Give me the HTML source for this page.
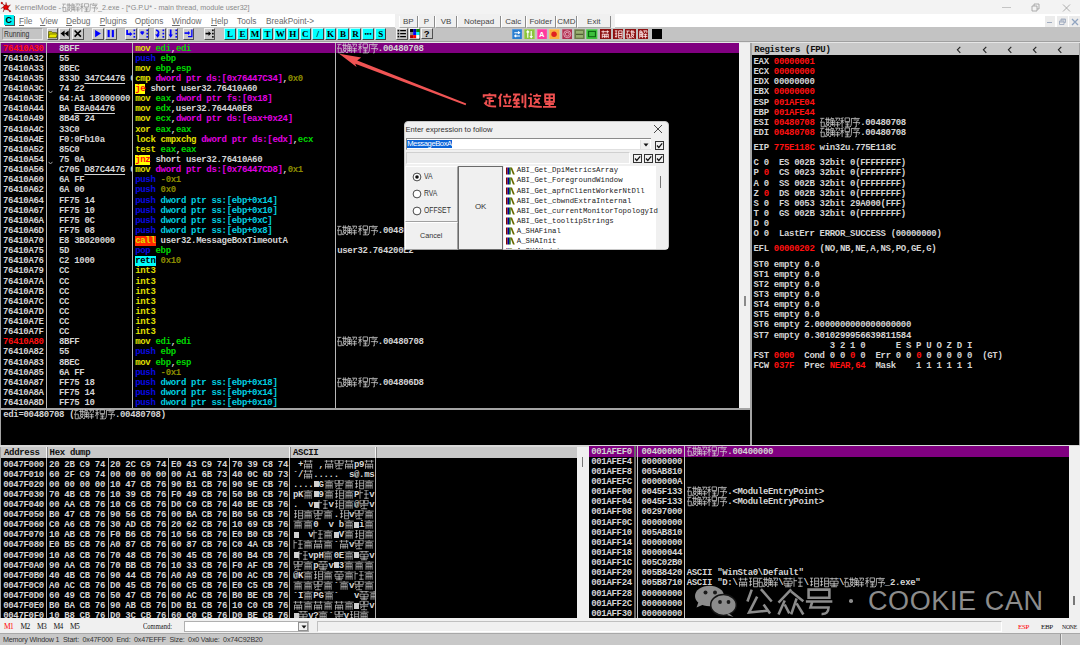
<!DOCTYPE html>
<html><head><meta charset="utf-8">
<style>
*{margin:0;padding:0;box-sizing:border-box}
html,body{width:1080px;height:645px;overflow:hidden;background:#f0f0f0;position:relative;font-family:"Liberation Sans",sans-serif}
.a{position:absolute}
.m{font-family:"Liberation Mono",monospace;font-weight:bold;font-size:9.00px;letter-spacing:-0.32px;line-height:10px;height:10px;white-space:pre;color:#d4d4d4}
.m u{text-decoration:underline;text-underline-offset:1.5px;text-decoration-thickness:1px}
.s{font-family:"Liberation Sans",sans-serif;font-size:8px;line-height:10px;height:10px;white-space:pre}
</style></head><body>
<div class="a" style="left:0.00px;top:0.00px;width:1080.00px;height:14.30px;background:#f3f3f3"></div>
<div class="a" style="left:0.00px;top:14.30px;width:1080.00px;height:13.00px;background:#fff"></div>
<div class="a" style="left:0.00px;top:27.30px;width:1080.00px;height:14.00px;background:#c3c3c3"></div>
<div class="a" style="left:0.00px;top:40.70px;width:1080.00px;height:1.00px;background:#a0a0a0"></div>
<div class="a" style="left:0.00px;top:41.70px;width:1080.00px;height:1.30px;background:#e6e6e6"></div>
<div class="a" style="left:0.00px;top:43.00px;width:1080.00px;height:590.00px;background:#a4a4a4"></div>
<div class="a" style="left:1.00px;top:43.00px;width:738.40px;height:365.00px;background:#000"></div>
<div class="a" style="left:739.40px;top:43.00px;width:11.00px;height:365.00px;background:#f0f0f0"></div>
<div class="a" style="left:744.00px;top:295.50px;width:2.00px;height:10.70px;background:#8a8a8a"></div>
<div class="a" style="left:1.00px;top:409.50px;width:749.20px;height:35.50px;background:#000"></div>
<div class="a" style="left:751.50px;top:43.00px;width:327.50px;height:12.00px;background:#c8c8c8"></div>
<div class="a" style="left:751.50px;top:55.00px;width:327.50px;height:390.00px;background:#000"></div>
<div class="a" style="left:0.00px;top:445.00px;width:1080.00px;height:1.50px;background:#d8d8d8"></div>
<div class="a" style="left:1.00px;top:446.50px;width:576.00px;height:11.50px;background:#c8c8c8"></div>
<div class="a" style="left:1.00px;top:458.00px;width:576.00px;height:160.30px;background:#000"></div>
<div class="a" style="left:577.00px;top:446.50px;width:12.00px;height:172.00px;background:#f0f0f0"></div>
<div class="a" style="left:581.50px;top:457.00px;width:1.50px;height:10.00px;background:#777"></div>
<div class="a" style="left:589.00px;top:446.00px;width:480.00px;height:172.30px;background:#000"></div>
<div class="a" style="left:1068.60px;top:446.00px;width:11.40px;height:172.30px;background:#f0f0f0"></div>
<div class="a" style="left:1073.00px;top:595.50px;width:1.50px;height:9.50px;background:#777"></div>
<div class="a" style="left:0.00px;top:618.30px;width:1080.00px;height:15.00px;background:#f0f0f0"></div>
<div class="a" style="left:0.00px;top:633.30px;width:1080.00px;height:11.70px;background:#c8c8c8"></div>
<div class="a" style="left:0.00px;top:633.30px;width:1080.00px;height:1.00px;background:#a8a8a8"></div>
<svg width="0" height="0" style="position:absolute"><defs><path id="G0" d="M0.3 1.2H4.3M2.2 1.2L0.6 5.8M1.2 5h3v4.5h-3zM5 2.2H9.6V3.6M6.6 0.3V5.5Q6.3 8 5 9.8M8.2 0.3V5M6.6 5.4H9.3Q8.5 8 6 9.7M7 6.6Q8.5 8.8 9.8 9.6"/><path id="G1" d="M1.5 0.3L0.5 2.8M1.2 1.4H3.6L3 2.6M0.8 3h3.4V9.6M0.8 3V8Q0.8 9 0.2 9.8M0.8 5.2H4.2M0.8 7.3H4.2M2.5 3V8.5M5 1H9.4Q9.4 3.3 8.6 3.8M7 1Q6.8 3.2 5.2 4.2M5.3 5.5H9.7M5 7.6H9.8M7.5 4.2V9.8"/><path id="G2" d="M0.5 1.4L3.5 0.6M0.3 3.6H4M2.1 1V9.8M2.1 3.8L0.3 7M2.1 4.2L3.8 6M5 0.8h4.4v3.6h-4.4zM5 5.6H9.5M5.3 7.6H9.2M4.8 9.6H9.8M7.2 5.6V9.6"/><path id="G3" d="M5 0.2V1.2M1.2 1.3H9.6M1.4 1.3V6Q1.3 8.5 0.2 9.8M3.5 2.8H8.6L6.2 4.6M2.8 5.4H9.6Q9.2 6.5 8.4 7.2M6.2 4.6V9.6Q6 10 5 9.4"/><path id="G4" d="M5 0.2V1.5M1 3V1.5H9V3M3 3.5H7M5 3.5V8M5 5.5H8M3 5L2.5 7.5M1.5 6.5C3 9 5 9.3 9.5 9.3"/><path id="G5" d="M3 0.5L1 4M2 2.5V9.5M6.5 0.5V1.8M4 2.5H9.5M5 4L6 7.5M9 4L8 7.5M4 9H10"/><path id="G6" d="M0.5 1H5.5M3 1L1 5H5M3.5 3.5L4.5 5M3 5.5V9M1 7H5M0.5 9.5H5.5M7 1.5V7M9 0.5V9.5L8 9"/><path id="G7" d="M2 0.5L3 1.5M0.5 3.5H2.5V8L1 9.5M1.5 8.5C4 9.5 7 9.5 10 9.5M6.5 0.5V1.5M4 2H9.5M5 3.5L8.5 7.5M8.5 3.5L4.5 7.5"/><path id="G8" d="M2 1h6v5h-6zM2 3.5H8M5 1V9M2 7.5H8M0.5 9.5H9.5"/><path id="G9" d="M2 0.6L0.4 5M5.4 0.4L9.4 5M4 3.2L1 9.1L7.7 8.4M6.4 6.1L8.8 9.4"/><path id="G10" d="M5.5 0.5L0.8 5.4M5.5 1.3L10 4.9M3.1 4.6L0.8 9.8M3.1 6.1L4.8 9.4M7.5 3.9L5.5 9.8M7.5 5.7L10 9.8"/><path id="G11" d="M1.2 0.6h7.7v3h-7.7zM0.2 5H10M2.6 5L1.9 7.2H8.6Q8.5 9.8 6 9.6"/><path id="G12" d="M0.5 1.5H9.5M3 0.5V3M7 0.5V3M1 4h8v2.5h-8zM5 4V9.5M1 8H9M2 9.5H8"/><path id="G13" d="M1 1L4 1M2.5 1V9M1 4.5H4M1 8L4 7M5.5 1h4v8.5h-4zM5.5 4H9.5M5.5 6.5H9.5"/><path id="G14" d="M0.5 2H9.5M2.5 0.5V4M7.5 0.5V4M1 5H9M1.5 5V9.5M8.5 5V9.5M1.5 7.5H8.5M4 5V9.5M6 5V9.5"/><path id="G15" d="M1 1h3.5v3.5h-3.5zM5.5 1h3.5v3.5h-3.5zM1 6H9M5 5V9.5M2 9.5H8M1 8L3 7"/><path id="G16" d="M5 0.5V2M0.5 2H9.5M2 3.5V9.5M2 3.5H8V9.5M2 6.5H8M4 3.5V9.5M6 3.5V9.5"/><path id="G17" d="M1 0.5V9.5M1 3.5H4M5 1H9.5M7 1V9.5M5 5H9.5M5 9H9.5"/><path id="G18" d="M1.5 2.5h6v6h-6z" fill="currentColor" stroke="none"/></defs></svg>
<div class="a" style="left:1.00px;top:43.00px;width:738.40px;height:10.43px;background:#800080"></div>
<div class="a m" style="left:3.00px;top:43.56px;"><span style="color:#ff1010">76410A30</span></div>
<div class="a m" style="left:59px;top:43.56px;width:72.6px;overflow:hidden;color:#d4d4d4">8BFF</div>
<div class="a m" style="left:135.20px;top:43.56px;"><span style="color:#e0e000">mov</span><span style="color:#d4d4d4"> </span><span style="color:#00d800">edi</span><span style="color:#d4d4d4">,</span><span style="color:#00d800">edi</span></div>
<div class="a m" style="left:337.20px;top:43.56px;"><svg width="10.16" height="10.40" viewBox="0 0 10 10" style="vertical-align:top;position:relative;top:-1.00px;overflow:visible" fill="none" stroke="#d4d4d4" stroke-width="0.75"><use href="#G0"/></svg><svg width="10.16" height="10.40" viewBox="0 0 10 10" style="vertical-align:top;position:relative;top:-1.00px;overflow:visible" fill="none" stroke="#d4d4d4" stroke-width="0.75"><use href="#G1"/></svg><svg width="10.16" height="10.40" viewBox="0 0 10 10" style="vertical-align:top;position:relative;top:-1.00px;overflow:visible" fill="none" stroke="#d4d4d4" stroke-width="0.75"><use href="#G2"/></svg><svg width="10.16" height="10.40" viewBox="0 0 10 10" style="vertical-align:top;position:relative;top:-1.00px;overflow:visible" fill="none" stroke="#d4d4d4" stroke-width="0.75"><use href="#G3"/></svg>.00480708</div>
<div class="a m" style="left:3.00px;top:53.70px;"><span style="color:#d4d4d4">76410A32</span></div>
<div class="a m" style="left:59px;top:53.70px;width:72.6px;overflow:hidden;color:#d4d4d4">55</div>
<div class="a m" style="left:135.20px;top:53.70px;"><span style="color:#0a0ae0">push</span><span style="color:#d4d4d4"> </span><span style="color:#00d800">ebp</span></div>
<div class="a m" style="left:3.00px;top:63.83px;"><span style="color:#d4d4d4">76410A33</span></div>
<div class="a m" style="left:59px;top:63.83px;width:72.6px;overflow:hidden;color:#d4d4d4">8BEC</div>
<div class="a m" style="left:135.20px;top:63.83px;"><span style="color:#e0e000">mov</span><span style="color:#d4d4d4"> </span><span style="color:#00d800">ebp</span><span style="color:#d4d4d4">,</span><span style="color:#00d800">esp</span></div>
<div class="a m" style="left:3.00px;top:73.96px;"><span style="color:#d4d4d4">76410A35</span></div>
<div class="a m" style="left:59px;top:73.96px;width:72.6px;overflow:hidden;color:#d4d4d4">833D <u>347C4476</u> 0</div>
<div class="a m" style="left:135.20px;top:73.96px;"><span style="color:#e0e000">cmp</span><span style="color:#d4d4d4"> </span><span style="color:#e000e0">dword ptr ds:[0x76447C34]</span><span style="color:#d4d4d4">,</span><span style="color:#8c8c00">0x0</span></div>
<div class="a m" style="left:3.00px;top:84.09px;"><span style="color:#d4d4d4">76410A3C</span></div>
<div class="a m" style="left:59px;top:84.09px;width:72.6px;overflow:hidden;color:#d4d4d4">74 22</div>
<div class="a m" style="left:135.20px;top:84.09px;"><span style="display:inline-block;height:10.2px;vertical-align:top;color:#ff1010;background:#ffff00">je</span><span style="color:#d4d4d4"> short user32.76410A60</span></div>
<div class="a m" style="left:3.00px;top:94.22px;"><span style="color:#d4d4d4">76410A3E</span></div>
<div class="a m" style="left:59px;top:94.22px;width:72.6px;overflow:hidden;color:#d4d4d4">64:A1 18000000</div>
<div class="a m" style="left:135.20px;top:94.22px;"><span style="color:#e0e000">mov</span><span style="color:#d4d4d4"> </span><span style="color:#00d800">eax</span><span style="color:#d4d4d4">,</span><span style="color:#e000e0">dword ptr fs:[0x18]</span></div>
<div class="a m" style="left:3.00px;top:104.34px;"><span style="color:#d4d4d4">76410A44</span></div>
<div class="a m" style="left:59px;top:104.34px;width:72.6px;overflow:hidden;color:#d4d4d4">BA <u>E8A04476</u></div>
<div class="a m" style="left:135.20px;top:104.34px;"><span style="color:#e0e000">mov</span><span style="color:#d4d4d4"> </span><span style="color:#00d800">edx</span><span style="color:#d4d4d4">,user32.7644A0E8</span></div>
<div class="a m" style="left:3.00px;top:114.48px;"><span style="color:#d4d4d4">76410A49</span></div>
<div class="a m" style="left:59px;top:114.48px;width:72.6px;overflow:hidden;color:#d4d4d4">8B48 24</div>
<div class="a m" style="left:135.20px;top:114.48px;"><span style="color:#e0e000">mov</span><span style="color:#d4d4d4"> </span><span style="color:#00d800">ecx</span><span style="color:#d4d4d4">,</span><span style="color:#e000e0">dword ptr ds:[eax+0x24]</span></div>
<div class="a m" style="left:3.00px;top:124.61px;"><span style="color:#d4d4d4">76410A4C</span></div>
<div class="a m" style="left:59px;top:124.61px;width:72.6px;overflow:hidden;color:#d4d4d4">33C0</div>
<div class="a m" style="left:135.20px;top:124.61px;"><span style="color:#e0e000">xor</span><span style="color:#d4d4d4"> </span><span style="color:#00d800">eax</span><span style="color:#d4d4d4">,</span><span style="color:#00d800">eax</span></div>
<div class="a m" style="left:3.00px;top:134.74px;"><span style="color:#d4d4d4">76410A4E</span></div>
<div class="a m" style="left:59px;top:134.74px;width:72.6px;overflow:hidden;color:#d4d4d4">F0:0Fb10a</div>
<div class="a m" style="left:135.20px;top:134.74px;"><span style="color:#e0e000">lock cmpxchg</span><span style="color:#d4d4d4"> </span><span style="color:#e000e0">dword ptr ds:[edx]</span><span style="color:#d4d4d4">,</span><span style="color:#00d800">ecx</span></div>
<div class="a m" style="left:3.00px;top:144.87px;"><span style="color:#d4d4d4">76410A52</span></div>
<div class="a m" style="left:59px;top:144.87px;width:72.6px;overflow:hidden;color:#d4d4d4">85C0</div>
<div class="a m" style="left:135.20px;top:144.87px;"><span style="color:#e0e000">test</span><span style="color:#d4d4d4"> </span><span style="color:#00d800">eax</span><span style="color:#d4d4d4">,</span><span style="color:#00d800">eax</span></div>
<div class="a m" style="left:3.00px;top:155.00px;"><span style="color:#d4d4d4">76410A54</span></div>
<div class="a m" style="left:59px;top:155.00px;width:72.6px;overflow:hidden;color:#d4d4d4">75 0A</div>
<div class="a m" style="left:135.20px;top:155.00px;"><span style="display:inline-block;height:10.2px;vertical-align:top;color:#ff1010;background:#ffff00">jnz</span><span style="color:#d4d4d4"> short user32.76410A60</span></div>
<div class="a m" style="left:3.00px;top:165.12px;"><span style="color:#d4d4d4">76410A56</span></div>
<div class="a m" style="left:59px;top:165.12px;width:72.6px;overflow:hidden;color:#d4d4d4">C705 <u>D87C4476</u> 0</div>
<div class="a m" style="left:135.20px;top:165.12px;"><span style="color:#e0e000">mov</span><span style="color:#d4d4d4"> </span><span style="color:#e000e0">dword ptr ds:[0x76447CD8]</span><span style="color:#d4d4d4">,</span><span style="color:#8c8c00">0x1</span></div>
<div class="a m" style="left:3.00px;top:175.26px;"><span style="color:#d4d4d4">76410A60</span></div>
<div class="a m" style="left:59px;top:175.26px;width:72.6px;overflow:hidden;color:#d4d4d4">6A FF</div>
<div class="a m" style="left:135.20px;top:175.26px;"><span style="color:#0a0ae0">push</span><span style="color:#d4d4d4"> </span><span style="color:#8c8c00">-0x1</span></div>
<div class="a m" style="left:3.00px;top:185.39px;"><span style="color:#d4d4d4">76410A62</span></div>
<div class="a m" style="left:59px;top:185.39px;width:72.6px;overflow:hidden;color:#d4d4d4">6A 00</div>
<div class="a m" style="left:135.20px;top:185.39px;"><span style="color:#0a0ae0">push</span><span style="color:#d4d4d4"> </span><span style="color:#8c8c00">0x0</span></div>
<div class="a m" style="left:3.00px;top:195.52px;"><span style="color:#d4d4d4">76410A64</span></div>
<div class="a m" style="left:59px;top:195.52px;width:72.6px;overflow:hidden;color:#d4d4d4">FF75 14</div>
<div class="a m" style="left:135.20px;top:195.52px;"><span style="color:#0a0ae0">push</span><span style="color:#d4d4d4"> </span><span style="color:#00d0e0">dword ptr ss:[ebp+0x14]</span></div>
<div class="a m" style="left:3.00px;top:205.65px;"><span style="color:#d4d4d4">76410A67</span></div>
<div class="a m" style="left:59px;top:205.65px;width:72.6px;overflow:hidden;color:#d4d4d4">FF75 10</div>
<div class="a m" style="left:135.20px;top:205.65px;"><span style="color:#0a0ae0">push</span><span style="color:#d4d4d4"> </span><span style="color:#00d0e0">dword ptr ss:[ebp+0x10]</span></div>
<div class="a m" style="left:3.00px;top:215.78px;"><span style="color:#d4d4d4">76410A6A</span></div>
<div class="a m" style="left:59px;top:215.78px;width:72.6px;overflow:hidden;color:#d4d4d4">FF75 0C</div>
<div class="a m" style="left:135.20px;top:215.78px;"><span style="color:#0a0ae0">push</span><span style="color:#d4d4d4"> </span><span style="color:#00d0e0">dword ptr ss:[ebp+0xC]</span></div>
<div class="a m" style="left:3.00px;top:225.91px;"><span style="color:#d4d4d4">76410A6D</span></div>
<div class="a m" style="left:59px;top:225.91px;width:72.6px;overflow:hidden;color:#d4d4d4">FF75 08</div>
<div class="a m" style="left:135.20px;top:225.91px;"><span style="color:#0a0ae0">push</span><span style="color:#d4d4d4"> </span><span style="color:#00d0e0">dword ptr ss:[ebp+0x8]</span></div>
<div class="a m" style="left:337.20px;top:225.91px;"><svg width="10.16" height="10.40" viewBox="0 0 10 10" style="vertical-align:top;position:relative;top:-1.00px;overflow:visible" fill="none" stroke="#d4d4d4" stroke-width="0.75"><use href="#G0"/></svg><svg width="10.16" height="10.40" viewBox="0 0 10 10" style="vertical-align:top;position:relative;top:-1.00px;overflow:visible" fill="none" stroke="#d4d4d4" stroke-width="0.75"><use href="#G1"/></svg><svg width="10.16" height="10.40" viewBox="0 0 10 10" style="vertical-align:top;position:relative;top:-1.00px;overflow:visible" fill="none" stroke="#d4d4d4" stroke-width="0.75"><use href="#G2"/></svg><svg width="10.16" height="10.40" viewBox="0 0 10 10" style="vertical-align:top;position:relative;top:-1.00px;overflow:visible" fill="none" stroke="#d4d4d4" stroke-width="0.75"><use href="#G3"/></svg>.00480708</div>
<div class="a m" style="left:3.00px;top:236.04px;"><span style="color:#d4d4d4">76410A70</span></div>
<div class="a m" style="left:59px;top:236.04px;width:72.6px;overflow:hidden;color:#d4d4d4">E8 3B020000</div>
<div class="a m" style="left:135.20px;top:236.04px;"><span style="display:inline-block;height:10.2px;vertical-align:top;color:#e0e000;background:#ff2800">call</span><span style="color:#d4d4d4"> user32.MessageBoxTimeoutA</span></div>
<div class="a m" style="left:3.00px;top:246.17px;"><span style="color:#d4d4d4">76410A75</span></div>
<div class="a m" style="left:59px;top:246.17px;width:72.6px;overflow:hidden;color:#d4d4d4">5D</div>
<div class="a m" style="left:135.20px;top:246.17px;"><span style="color:#0a0ae0">pop</span><span style="color:#d4d4d4"> </span><span style="color:#00d800">ebp</span></div>
<div class="a m" style="left:337.20px;top:246.17px;">user32.764200E2</div>
<div class="a m" style="left:3.00px;top:256.30px;"><span style="color:#d4d4d4">76410A76</span></div>
<div class="a m" style="left:59px;top:256.30px;width:72.6px;overflow:hidden;color:#d4d4d4">C2 1000</div>
<div class="a m" style="left:135.20px;top:256.30px;"><span style="display:inline-block;height:10.2px;vertical-align:top;color:#000;background:#00ffff">retn</span><span style="color:#d4d4d4"> </span><span style="color:#8c8c00">0x10</span></div>
<div class="a m" style="left:3.00px;top:266.43px;"><span style="color:#d4d4d4">76410A79</span></div>
<div class="a m" style="left:59px;top:266.43px;width:72.6px;overflow:hidden;color:#d4d4d4">CC</div>
<div class="a m" style="left:135.20px;top:266.43px;"><span style="color:#e0e000">int3</span></div>
<div class="a m" style="left:3.00px;top:276.56px;"><span style="color:#d4d4d4">76410A7A</span></div>
<div class="a m" style="left:59px;top:276.56px;width:72.6px;overflow:hidden;color:#d4d4d4">CC</div>
<div class="a m" style="left:135.20px;top:276.56px;"><span style="color:#e0e000">int3</span></div>
<div class="a m" style="left:3.00px;top:286.69px;"><span style="color:#d4d4d4">76410A7B</span></div>
<div class="a m" style="left:59px;top:286.69px;width:72.6px;overflow:hidden;color:#d4d4d4">CC</div>
<div class="a m" style="left:135.20px;top:286.69px;"><span style="color:#e0e000">int3</span></div>
<div class="a m" style="left:3.00px;top:296.81px;"><span style="color:#d4d4d4">76410A7C</span></div>
<div class="a m" style="left:59px;top:296.81px;width:72.6px;overflow:hidden;color:#d4d4d4">CC</div>
<div class="a m" style="left:135.20px;top:296.81px;"><span style="color:#e0e000">int3</span></div>
<div class="a m" style="left:3.00px;top:306.94px;"><span style="color:#d4d4d4">76410A7D</span></div>
<div class="a m" style="left:59px;top:306.94px;width:72.6px;overflow:hidden;color:#d4d4d4">CC</div>
<div class="a m" style="left:135.20px;top:306.94px;"><span style="color:#e0e000">int3</span></div>
<div class="a m" style="left:3.00px;top:317.08px;"><span style="color:#d4d4d4">76410A7E</span></div>
<div class="a m" style="left:59px;top:317.08px;width:72.6px;overflow:hidden;color:#d4d4d4">CC</div>
<div class="a m" style="left:135.20px;top:317.08px;"><span style="color:#e0e000">int3</span></div>
<div class="a m" style="left:3.00px;top:327.21px;"><span style="color:#d4d4d4">76410A7F</span></div>
<div class="a m" style="left:59px;top:327.21px;width:72.6px;overflow:hidden;color:#d4d4d4">CC</div>
<div class="a m" style="left:135.20px;top:327.21px;"><span style="color:#e0e000">int3</span></div>
<div class="a m" style="left:3.00px;top:337.34px;"><span style="color:#ff1010">76410A80</span></div>
<div class="a m" style="left:59px;top:337.34px;width:72.6px;overflow:hidden;color:#d4d4d4">8BFF</div>
<div class="a m" style="left:135.20px;top:337.34px;"><span style="color:#e0e000">mov</span><span style="color:#d4d4d4"> </span><span style="color:#00d800">edi</span><span style="color:#d4d4d4">,</span><span style="color:#00d800">edi</span></div>
<div class="a m" style="left:337.20px;top:337.34px;"><svg width="10.16" height="10.40" viewBox="0 0 10 10" style="vertical-align:top;position:relative;top:-1.00px;overflow:visible" fill="none" stroke="#d4d4d4" stroke-width="0.75"><use href="#G0"/></svg><svg width="10.16" height="10.40" viewBox="0 0 10 10" style="vertical-align:top;position:relative;top:-1.00px;overflow:visible" fill="none" stroke="#d4d4d4" stroke-width="0.75"><use href="#G1"/></svg><svg width="10.16" height="10.40" viewBox="0 0 10 10" style="vertical-align:top;position:relative;top:-1.00px;overflow:visible" fill="none" stroke="#d4d4d4" stroke-width="0.75"><use href="#G2"/></svg><svg width="10.16" height="10.40" viewBox="0 0 10 10" style="vertical-align:top;position:relative;top:-1.00px;overflow:visible" fill="none" stroke="#d4d4d4" stroke-width="0.75"><use href="#G3"/></svg>.00480708</div>
<div class="a m" style="left:3.00px;top:347.47px;"><span style="color:#d4d4d4">76410A82</span></div>
<div class="a m" style="left:59px;top:347.47px;width:72.6px;overflow:hidden;color:#d4d4d4">55</div>
<div class="a m" style="left:135.20px;top:347.47px;"><span style="color:#0a0ae0">push</span><span style="color:#d4d4d4"> </span><span style="color:#00d800">ebp</span></div>
<div class="a m" style="left:3.00px;top:357.60px;"><span style="color:#d4d4d4">76410A83</span></div>
<div class="a m" style="left:59px;top:357.60px;width:72.6px;overflow:hidden;color:#d4d4d4">8BEC</div>
<div class="a m" style="left:135.20px;top:357.60px;"><span style="color:#e0e000">mov</span><span style="color:#d4d4d4"> </span><span style="color:#00d800">ebp</span><span style="color:#d4d4d4">,</span><span style="color:#00d800">esp</span></div>
<div class="a m" style="left:3.00px;top:367.73px;"><span style="color:#d4d4d4">76410A85</span></div>
<div class="a m" style="left:59px;top:367.73px;width:72.6px;overflow:hidden;color:#d4d4d4">6A FF</div>
<div class="a m" style="left:135.20px;top:367.73px;"><span style="color:#0a0ae0">push</span><span style="color:#d4d4d4"> </span><span style="color:#8c8c00">-0x1</span></div>
<div class="a m" style="left:3.00px;top:377.86px;"><span style="color:#d4d4d4">76410A87</span></div>
<div class="a m" style="left:59px;top:377.86px;width:72.6px;overflow:hidden;color:#d4d4d4">FF75 18</div>
<div class="a m" style="left:135.20px;top:377.86px;"><span style="color:#0a0ae0">push</span><span style="color:#d4d4d4"> </span><span style="color:#00d0e0">dword ptr ss:[ebp+0x18]</span></div>
<div class="a m" style="left:337.20px;top:377.86px;"><svg width="10.16" height="10.40" viewBox="0 0 10 10" style="vertical-align:top;position:relative;top:-1.00px;overflow:visible" fill="none" stroke="#d4d4d4" stroke-width="0.75"><use href="#G0"/></svg><svg width="10.16" height="10.40" viewBox="0 0 10 10" style="vertical-align:top;position:relative;top:-1.00px;overflow:visible" fill="none" stroke="#d4d4d4" stroke-width="0.75"><use href="#G1"/></svg><svg width="10.16" height="10.40" viewBox="0 0 10 10" style="vertical-align:top;position:relative;top:-1.00px;overflow:visible" fill="none" stroke="#d4d4d4" stroke-width="0.75"><use href="#G2"/></svg><svg width="10.16" height="10.40" viewBox="0 0 10 10" style="vertical-align:top;position:relative;top:-1.00px;overflow:visible" fill="none" stroke="#d4d4d4" stroke-width="0.75"><use href="#G3"/></svg>.004806D8</div>
<div class="a m" style="left:3.00px;top:387.99px;"><span style="color:#d4d4d4">76410A8A</span></div>
<div class="a m" style="left:59px;top:387.99px;width:72.6px;overflow:hidden;color:#d4d4d4">FF75 14</div>
<div class="a m" style="left:135.20px;top:387.99px;"><span style="color:#0a0ae0">push</span><span style="color:#d4d4d4"> </span><span style="color:#00d0e0">dword ptr ss:[ebp+0x14]</span></div>
<div class="a m" style="left:3.00px;top:398.12px;"><span style="color:#d4d4d4">76410A8D</span></div>
<div class="a m" style="left:59px;top:398.12px;width:72.6px;overflow:hidden;color:#d4d4d4">FF75 10</div>
<div class="a m" style="left:135.20px;top:398.12px;"><span style="color:#0a0ae0">push</span><span style="color:#d4d4d4"> </span><span style="color:#00d0e0">dword ptr ss:[ebp+0x10]</span></div>
<div class="a" style="left:45.90px;top:43.00px;width:1.10px;height:365.00px;background:#b8b8b8"></div>
<div class="a" style="left:131.90px;top:43.00px;width:1.10px;height:365.00px;background:#b8b8b8"></div>
<div class="a" style="left:334.70px;top:43.00px;width:1.10px;height:365.00px;background:#b8b8b8"></div>
<svg class="a" style="left:48px;top:90.09px" width="5" height="4"><path d="M0.5 0.8L2.5 3L4.5 0.8" stroke="#aaa" stroke-width="0.9" fill="none"/></svg>
<svg class="a" style="left:48px;top:161.00px" width="5" height="4"><path d="M0.5 0.8L2.5 3L4.5 0.8" stroke="#aaa" stroke-width="0.9" fill="none"/></svg>
<div class="a m" style="left:3.20px;top:409.80px;">edi=00480708 (<svg width="10.16" height="10.40" viewBox="0 0 10 10" style="vertical-align:top;position:relative;top:-1.00px;overflow:visible" fill="none" stroke="#d4d4d4" stroke-width="0.75"><use href="#G0"/></svg><svg width="10.16" height="10.40" viewBox="0 0 10 10" style="vertical-align:top;position:relative;top:-1.00px;overflow:visible" fill="none" stroke="#d4d4d4" stroke-width="0.75"><use href="#G1"/></svg><svg width="10.16" height="10.40" viewBox="0 0 10 10" style="vertical-align:top;position:relative;top:-1.00px;overflow:visible" fill="none" stroke="#d4d4d4" stroke-width="0.75"><use href="#G2"/></svg><svg width="10.16" height="10.40" viewBox="0 0 10 10" style="vertical-align:top;position:relative;top:-1.00px;overflow:visible" fill="none" stroke="#d4d4d4" stroke-width="0.75"><use href="#G3"/></svg>.00480708)</div>
<div class="a m" style="left:754.3px;top:45px;color:#101010">Registers (FPU)</div>
<svg class="a" style="left:956.00px;top:46.3px" width="6" height="8"><path d="M4.3 0.8L1.4 3.8L4.3 6.8" stroke="#222" stroke-width="1.1" fill="none"/></svg>
<svg class="a" style="left:981.50px;top:46.3px" width="6" height="8"><path d="M4.3 0.8L1.4 3.8L4.3 6.8" stroke="#222" stroke-width="1.1" fill="none"/></svg>
<svg class="a" style="left:1006.60px;top:46.3px" width="6" height="8"><path d="M4.3 0.8L1.4 3.8L4.3 6.8" stroke="#222" stroke-width="1.1" fill="none"/></svg>
<svg class="a" style="left:1032.00px;top:46.3px" width="6" height="8"><path d="M4.3 0.8L1.4 3.8L4.3 6.8" stroke="#222" stroke-width="1.1" fill="none"/></svg>
<svg class="a" style="left:1057.40px;top:46.3px" width="6" height="8"><path d="M4.3 0.8L1.4 3.8L4.3 6.8" stroke="#222" stroke-width="1.1" fill="none"/></svg>
<div class="a m" style="left:753.50px;top:57.00px;"><span style="color:#d4d4d4">EAX </span><span style="color:#ff1010">00000001</span></div>
<div class="a m" style="left:753.50px;top:67.13px;"><span style="color:#d4d4d4">ECX </span><span style="color:#ff1010">00000000</span></div>
<div class="a m" style="left:753.50px;top:77.26px;"><span style="color:#d4d4d4">EDX </span><span style="color:#d4d4d4">00000000</span></div>
<div class="a m" style="left:753.50px;top:87.39px;"><span style="color:#d4d4d4">EBX </span><span style="color:#ff1010">00000000</span></div>
<div class="a m" style="left:753.50px;top:97.52px;"><span style="color:#d4d4d4">ESP </span><span style="color:#ff1010">001AFE04</span></div>
<div class="a m" style="left:753.50px;top:107.65px;"><span style="color:#d4d4d4">EBP </span><span style="color:#ff1010">001AFE44</span></div>
<div class="a m" style="left:753.50px;top:117.78px;"><span style="color:#d4d4d4">ESI </span><span style="color:#ff1010">00480708</span><span style="color:#d4d4d4"> </span><svg width="10.16" height="10.40" viewBox="0 0 10 10" style="vertical-align:top;position:relative;top:-1.00px;overflow:visible" fill="none" stroke="#d4d4d4" stroke-width="0.75"><use href="#G0"/></svg><svg width="10.16" height="10.40" viewBox="0 0 10 10" style="vertical-align:top;position:relative;top:-1.00px;overflow:visible" fill="none" stroke="#d4d4d4" stroke-width="0.75"><use href="#G1"/></svg><svg width="10.16" height="10.40" viewBox="0 0 10 10" style="vertical-align:top;position:relative;top:-1.00px;overflow:visible" fill="none" stroke="#d4d4d4" stroke-width="0.75"><use href="#G2"/></svg><svg width="10.16" height="10.40" viewBox="0 0 10 10" style="vertical-align:top;position:relative;top:-1.00px;overflow:visible" fill="none" stroke="#d4d4d4" stroke-width="0.75"><use href="#G3"/></svg>.00480708</div>
<div class="a m" style="left:753.50px;top:127.91px;"><span style="color:#d4d4d4">EDI </span><span style="color:#ff1010">00480708</span><span style="color:#d4d4d4"> </span><svg width="10.16" height="10.40" viewBox="0 0 10 10" style="vertical-align:top;position:relative;top:-1.00px;overflow:visible" fill="none" stroke="#d4d4d4" stroke-width="0.75"><use href="#G0"/></svg><svg width="10.16" height="10.40" viewBox="0 0 10 10" style="vertical-align:top;position:relative;top:-1.00px;overflow:visible" fill="none" stroke="#d4d4d4" stroke-width="0.75"><use href="#G1"/></svg><svg width="10.16" height="10.40" viewBox="0 0 10 10" style="vertical-align:top;position:relative;top:-1.00px;overflow:visible" fill="none" stroke="#d4d4d4" stroke-width="0.75"><use href="#G2"/></svg><svg width="10.16" height="10.40" viewBox="0 0 10 10" style="vertical-align:top;position:relative;top:-1.00px;overflow:visible" fill="none" stroke="#d4d4d4" stroke-width="0.75"><use href="#G3"/></svg>.00480708</div>
<div class="a m" style="left:753.50px;top:143.11px;"><span style="color:#d4d4d4">EIP </span><span style="color:#ff1010">775E118C</span><span style="color:#d4d4d4"> win32u.775E118C</span></div>
<div class="a m" style="left:753.50px;top:158.30px;"><span style="color:#d4d4d4">C </span><span style="color:#d4d4d4">0</span><span style="color:#d4d4d4">  ES 002B 32bit 0(FFFFFFFF)</span></div>
<div class="a m" style="left:753.50px;top:168.43px;"><span style="color:#d4d4d4">P </span><span style="color:#ff1010">0</span><span style="color:#d4d4d4">  CS 0023 32bit 0(FFFFFFFF)</span></div>
<div class="a m" style="left:753.50px;top:178.56px;"><span style="color:#d4d4d4">A </span><span style="color:#d4d4d4">0</span><span style="color:#d4d4d4">  SS 002B 32bit 0(FFFFFFFF)</span></div>
<div class="a m" style="left:753.50px;top:188.69px;"><span style="color:#d4d4d4">Z </span><span style="color:#ff1010">0</span><span style="color:#d4d4d4">  DS 002B 32bit 0(FFFFFFFF)</span></div>
<div class="a m" style="left:753.50px;top:198.82px;"><span style="color:#d4d4d4">S </span><span style="color:#d4d4d4">0</span><span style="color:#d4d4d4">  FS 0053 32bit 29A000(FFF)</span></div>
<div class="a m" style="left:753.50px;top:208.95px;"><span style="color:#d4d4d4">T </span><span style="color:#d4d4d4">0</span><span style="color:#d4d4d4">  GS 002B 32bit 0(FFFFFFFF)</span></div>
<div class="a m" style="left:753.50px;top:219.08px;"><span style="color:#d4d4d4">D </span><span style="color:#d4d4d4">0</span><span style="color:#d4d4d4"></span></div>
<div class="a m" style="left:753.50px;top:229.21px;"><span style="color:#d4d4d4">O </span><span style="color:#d4d4d4">0</span><span style="color:#d4d4d4">  LastErr ERROR_SUCCESS (00000000)</span></div>
<div class="a m" style="left:753.50px;top:244.41px;"><span style="color:#d4d4d4">EFL </span><span style="color:#ff1010">00000202</span><span style="color:#d4d4d4"> (NO,NB,NE,A,NS,PO,GE,G)</span></div>
<div class="a m" style="left:753.50px;top:259.60px;"><span style="color:#d4d4d4">ST0 empty 0.0</span></div>
<div class="a m" style="left:753.50px;top:269.73px;"><span style="color:#d4d4d4">ST1 empty 0.0</span></div>
<div class="a m" style="left:753.50px;top:279.86px;"><span style="color:#d4d4d4">ST2 empty 0.0</span></div>
<div class="a m" style="left:753.50px;top:289.99px;"><span style="color:#d4d4d4">ST3 empty 0.0</span></div>
<div class="a m" style="left:753.50px;top:300.12px;"><span style="color:#d4d4d4">ST4 empty 0.0</span></div>
<div class="a m" style="left:753.50px;top:310.25px;"><span style="color:#d4d4d4">ST5 empty 0.0</span></div>
<div class="a m" style="left:753.50px;top:320.38px;"><span style="color:#d4d4d4">ST6 empty 2.0000000000000000000</span></div>
<div class="a m" style="left:753.50px;top:330.51px;"><span style="color:#d4d4d4">ST7 empty 0.3010299956639811584</span></div>
<div class="a m" style="left:753.50px;top:340.64px;"><span style="color:#d4d4d4">               3 2 1 0      E S P U O Z D I</span></div>
<div class="a m" style="left:753.50px;top:350.77px;"><span style="color:#d4d4d4">FST </span><span style="color:#ff1010">0000</span><span style="color:#d4d4d4">  Cond 0 0 </span><span style="color:#ff1010">0</span><span style="color:#d4d4d4"> 0  Err 0 0 </span><span style="color:#ff1010">0</span><span style="color:#d4d4d4"> 0 0 0 0 0  (GT)</span></div>
<div class="a m" style="left:753.50px;top:360.90px;"><span style="color:#d4d4d4">FCW </span><span style="color:#ff1010">037F</span><span style="color:#d4d4d4">  Prec </span><span style="color:#ff1010">NEAR,64</span><span style="color:#d4d4d4">  Mask    1 1 1 1 1 1</span></div>
<div class="a m" style="left:4px;top:447.5px;color:#101010">Address</div>
<div class="a m" style="left:49.6px;top:447.5px;color:#101010">Hex dump</div>
<div class="a m" style="left:293px;top:447.5px;color:#101010">ASCII</div>
<div class="a" style="left:45.90px;top:446.50px;width:1.20px;height:11.50px;background:#f4f4f4"></div>
<div class="a" style="left:47.00px;top:446.50px;width:0.80px;height:11.50px;background:#888"></div>
<div class="a" style="left:289.20px;top:446.50px;width:1.20px;height:11.50px;background:#f4f4f4"></div>
<div class="a" style="left:290.30px;top:446.50px;width:0.80px;height:11.50px;background:#888"></div>
<div class="a" style="left:374.80px;top:446.50px;width:1.20px;height:11.50px;background:#f4f4f4"></div>
<div class="a" style="left:375.90px;top:446.50px;width:0.80px;height:11.50px;background:#888"></div>
<div class="a" style="left:1px;top:458px;width:576px;height:160.3px;overflow:hidden">
<div class="a m" style="left:2.2px;top:1.60px">0047F000</div>
<div class="a m" style="left:48.10px;top:1.60px">20 2B C9 74</div>
<div class="a m" style="left:109.10px;top:1.60px">20 2C C9 74</div>
<div class="a m" style="left:170.10px;top:1.60px">E0 43 C9 74</div>
<div class="a m" style="left:231.10px;top:1.60px">70 39 C8 74</div>
<div class="a m" style="left:292px;top:1.60px;width:83px;overflow:hidden;color:#d8d8d8"> +<svg width="10.16" height="10.40" viewBox="0 0 10 10" style="vertical-align:top;position:relative;top:-1.00px;overflow:visible" fill="none" stroke="#d0d0d0" stroke-width="0.70"><use href="#G14"/></svg> ,<svg width="10.16" height="10.40" viewBox="0 0 10 10" style="vertical-align:top;position:relative;top:-1.00px;overflow:visible" fill="none" stroke="#d0d0d0" stroke-width="0.70"><use href="#G14"/></svg><svg width="10.16" height="10.40" viewBox="0 0 10 10" style="vertical-align:top;position:relative;top:-1.00px;overflow:visible" fill="none" stroke="#d0d0d0" stroke-width="0.70"><use href="#G15"/></svg><svg width="10.16" height="10.40" viewBox="0 0 10 10" style="vertical-align:top;position:relative;top:-1.00px;overflow:visible" fill="none" stroke="#d0d0d0" stroke-width="0.70"><use href="#G14"/></svg>p9<svg width="10.16" height="10.40" viewBox="0 0 10 10" style="vertical-align:top;position:relative;top:-1.00px;overflow:visible" fill="none" stroke="#d0d0d0" stroke-width="0.70"><use href="#G14"/></svg></div>
<div class="a m" style="left:2.2px;top:11.70px">0047F010</div>
<div class="a m" style="left:48.10px;top:11.70px">60 2F C9 74</div>
<div class="a m" style="left:109.10px;top:11.70px">00 00 00 00</div>
<div class="a m" style="left:170.10px;top:11.70px">00 A1 6B 73</div>
<div class="a m" style="left:231.10px;top:11.70px">40 0C 6D 73</div>
<div class="a m" style="left:292px;top:11.70px;width:83px;overflow:hidden;color:#d8d8d8">`/<svg width="10.16" height="10.40" viewBox="0 0 10 10" style="vertical-align:top;position:relative;top:-1.00px;overflow:visible" fill="none" stroke="#d0d0d0" stroke-width="0.70"><use href="#G14"/></svg>.....  s@.ms</div>
<div class="a m" style="left:2.2px;top:21.80px">0047F020</div>
<div class="a m" style="left:48.10px;top:21.80px">00 00 00 00</div>
<div class="a m" style="left:109.10px;top:21.80px">10 47 CB 76</div>
<div class="a m" style="left:170.10px;top:21.80px">90 B1 CB 76</div>
<div class="a m" style="left:231.10px;top:21.80px">90 9E CB 76</div>
<div class="a m" style="left:292px;top:21.80px;width:83px;overflow:hidden;color:#d8d8d8">....<span style="display:inline-block;width:5.08px;height:6px;vertical-align:-0.5px"><span style="display:inline-block;width:5px;height:6px;background:#d0d0d0;margin-left:0.5px"></span></span>G<svg width="10.16" height="10.40" viewBox="0 0 10 10" style="vertical-align:top;position:relative;top:-1.00px;overflow:visible" fill="none" stroke="#d0d0d0" stroke-width="0.70"><use href="#G16"/></svg><svg width="10.16" height="10.40" viewBox="0 0 10 10" style="vertical-align:top;position:relative;top:-1.00px;overflow:visible" fill="none" stroke="#d0d0d0" stroke-width="0.70"><use href="#G15"/></svg><svg width="10.16" height="10.40" viewBox="0 0 10 10" style="vertical-align:top;position:relative;top:-1.00px;overflow:visible" fill="none" stroke="#d0d0d0" stroke-width="0.70"><use href="#G16"/></svg><svg width="10.16" height="10.40" viewBox="0 0 10 10" style="vertical-align:top;position:relative;top:-1.00px;overflow:visible" fill="none" stroke="#d0d0d0" stroke-width="0.70"><use href="#G13"/></svg><svg width="10.16" height="10.40" viewBox="0 0 10 10" style="vertical-align:top;position:relative;top:-1.00px;overflow:visible" fill="none" stroke="#d0d0d0" stroke-width="0.70"><use href="#G16"/></svg></div>
<div class="a m" style="left:2.2px;top:31.90px">0047F030</div>
<div class="a m" style="left:48.10px;top:31.90px">70 4B CB 76</div>
<div class="a m" style="left:109.10px;top:31.90px">10 39 CB 76</div>
<div class="a m" style="left:170.10px;top:31.90px">F0 49 CB 76</div>
<div class="a m" style="left:231.10px;top:31.90px">50 B6 CB 76</div>
<div class="a m" style="left:292px;top:31.90px;width:83px;overflow:hidden;color:#d8d8d8">pK<svg width="10.16" height="10.40" viewBox="0 0 10 10" style="vertical-align:top;position:relative;top:-1.00px;overflow:visible" fill="none" stroke="#d0d0d0" stroke-width="0.70"><use href="#G16"/></svg><span style="display:inline-block;width:5.08px;height:6px;vertical-align:-0.5px"><span style="display:inline-block;width:5px;height:6px;background:#d0d0d0;margin-left:0.5px"></span></span>9<svg width="10.16" height="10.40" viewBox="0 0 10 10" style="vertical-align:top;position:relative;top:-1.00px;overflow:visible" fill="none" stroke="#d0d0d0" stroke-width="0.70"><use href="#G16"/></svg><svg width="10.16" height="10.40" viewBox="0 0 10 10" style="vertical-align:top;position:relative;top:-1.00px;overflow:visible" fill="none" stroke="#d0d0d0" stroke-width="0.70"><use href="#G13"/></svg><svg width="10.16" height="10.40" viewBox="0 0 10 10" style="vertical-align:top;position:relative;top:-1.00px;overflow:visible" fill="none" stroke="#d0d0d0" stroke-width="0.70"><use href="#G16"/></svg>P<svg width="10.16" height="10.40" viewBox="0 0 10 10" style="vertical-align:top;position:relative;top:-1.00px;overflow:visible" fill="none" stroke="#d0d0d0" stroke-width="0.70"><use href="#G17"/></svg>v</div>
<div class="a m" style="left:2.2px;top:42.00px">0047F040</div>
<div class="a m" style="left:48.10px;top:42.00px">00 AA CB 76</div>
<div class="a m" style="left:109.10px;top:42.00px">10 C6 CB 76</div>
<div class="a m" style="left:170.10px;top:42.00px">D0 C0 CB 76</div>
<div class="a m" style="left:231.10px;top:42.00px">40 BE CB 76</div>
<div class="a m" style="left:292px;top:42.00px;width:83px;overflow:hidden;color:#d8d8d8">.  v<span style="display:inline-block;width:5.08px;height:6px;vertical-align:-0.5px"><span style="display:inline-block;width:5px;height:6px;background:#d0d0d0;margin-left:0.5px"></span></span><svg width="10.16" height="10.40" viewBox="0 0 10 10" style="vertical-align:top;position:relative;top:-1.00px;overflow:visible" fill="none" stroke="#d0d0d0" stroke-width="0.70"><use href="#G17"/></svg>v<svg width="10.16" height="10.40" viewBox="0 0 10 10" style="vertical-align:top;position:relative;top:-1.00px;overflow:visible" fill="none" stroke="#d0d0d0" stroke-width="0.70"><use href="#G13"/></svg><svg width="10.16" height="10.40" viewBox="0 0 10 10" style="vertical-align:top;position:relative;top:-1.00px;overflow:visible" fill="none" stroke="#d0d0d0" stroke-width="0.70"><use href="#G16"/></svg>@<svg width="10.16" height="10.40" viewBox="0 0 10 10" style="vertical-align:top;position:relative;top:-1.00px;overflow:visible" fill="none" stroke="#d0d0d0" stroke-width="0.70"><use href="#G15"/></svg>v</div>
<div class="a m" style="left:2.2px;top:52.10px">0047F050</div>
<div class="a m" style="left:48.10px;top:52.10px">B0 47 CB 76</div>
<div class="a m" style="left:109.10px;top:52.10px">90 56 CB 76</div>
<div class="a m" style="left:170.10px;top:52.10px">00 BA CB 76</div>
<div class="a m" style="left:231.10px;top:52.10px">B0 56 CB 76</div>
<div class="a m" style="left:292px;top:52.10px;width:83px;overflow:hidden;color:#d8d8d8"><svg width="10.16" height="10.40" viewBox="0 0 10 10" style="vertical-align:top;position:relative;top:-1.00px;overflow:visible" fill="none" stroke="#d0d0d0" stroke-width="0.70"><use href="#G13"/></svg><svg width="10.16" height="10.40" viewBox="0 0 10 10" style="vertical-align:top;position:relative;top:-1.00px;overflow:visible" fill="none" stroke="#d0d0d0" stroke-width="0.70"><use href="#G16"/></svg><svg width="10.16" height="10.40" viewBox="0 0 10 10" style="vertical-align:top;position:relative;top:-1.00px;overflow:visible" fill="none" stroke="#d0d0d0" stroke-width="0.70"><use href="#G15"/></svg><svg width="10.16" height="10.40" viewBox="0 0 10 10" style="vertical-align:top;position:relative;top:-1.00px;overflow:visible" fill="none" stroke="#d0d0d0" stroke-width="0.70"><use href="#G16"/></svg>.<svg width="10.16" height="10.40" viewBox="0 0 10 10" style="vertical-align:top;position:relative;top:-1.00px;overflow:visible" fill="none" stroke="#d0d0d0" stroke-width="0.70"><use href="#G13"/></svg>v<svg width="10.16" height="10.40" viewBox="0 0 10 10" style="vertical-align:top;position:relative;top:-1.00px;overflow:visible" fill="none" stroke="#d0d0d0" stroke-width="0.70"><use href="#G15"/></svg><svg width="10.16" height="10.40" viewBox="0 0 10 10" style="vertical-align:top;position:relative;top:-1.00px;overflow:visible" fill="none" stroke="#d0d0d0" stroke-width="0.70"><use href="#G16"/></svg></div>
<div class="a m" style="left:2.2px;top:62.20px">0047F060</div>
<div class="a m" style="left:48.10px;top:62.20px">C0 A6 CB 76</div>
<div class="a m" style="left:109.10px;top:62.20px">30 AD CB 76</div>
<div class="a m" style="left:170.10px;top:62.20px">20 62 CB 76</div>
<div class="a m" style="left:231.10px;top:62.20px">10 69 CB 76</div>
<div class="a m" style="left:292px;top:62.20px;width:83px;overflow:hidden;color:#d8d8d8"><svg width="10.16" height="10.40" viewBox="0 0 10 10" style="vertical-align:top;position:relative;top:-1.00px;overflow:visible" fill="none" stroke="#d0d0d0" stroke-width="0.70"><use href="#G16"/></svg><svg width="10.16" height="10.40" viewBox="0 0 10 10" style="vertical-align:top;position:relative;top:-1.00px;overflow:visible" fill="none" stroke="#d0d0d0" stroke-width="0.70"><use href="#G16"/></svg>0  v b<svg width="10.16" height="10.40" viewBox="0 0 10 10" style="vertical-align:top;position:relative;top:-1.00px;overflow:visible" fill="none" stroke="#d0d0d0" stroke-width="0.70"><use href="#G16"/></svg><span style="display:inline-block;width:5.08px;height:6px;vertical-align:-0.5px"><span style="display:inline-block;width:5px;height:6px;background:#d0d0d0;margin-left:0.5px"></span></span>i<svg width="10.16" height="10.40" viewBox="0 0 10 10" style="vertical-align:top;position:relative;top:-1.00px;overflow:visible" fill="none" stroke="#d0d0d0" stroke-width="0.70"><use href="#G16"/></svg></div>
<div class="a m" style="left:2.2px;top:72.30px">0047F070</div>
<div class="a m" style="left:48.10px;top:72.30px">10 AB CB 76</div>
<div class="a m" style="left:109.10px;top:72.30px">F0 B6 CB 76</div>
<div class="a m" style="left:170.10px;top:72.30px">10 56 CB 76</div>
<div class="a m" style="left:231.10px;top:72.30px">E0 B0 CB 76</div>
<div class="a m" style="left:292px;top:72.30px;width:83px;overflow:hidden;color:#d8d8d8"><span style="display:inline-block;width:5.08px;height:6px;vertical-align:-0.5px"><span style="display:inline-block;width:5px;height:6px;background:#d0d0d0;margin-left:0.5px"></span></span>  v<svg width="10.16" height="10.40" viewBox="0 0 10 10" style="vertical-align:top;position:relative;top:-1.00px;overflow:visible" fill="none" stroke="#d0d0d0" stroke-width="0.70"><use href="#G17"/></svg><svg width="10.16" height="10.40" viewBox="0 0 10 10" style="vertical-align:top;position:relative;top:-1.00px;overflow:visible" fill="none" stroke="#d0d0d0" stroke-width="0.70"><use href="#G16"/></svg><span style="display:inline-block;width:5.08px;height:6px;vertical-align:-0.5px"><span style="display:inline-block;width:5px;height:6px;background:#d0d0d0;margin-left:0.5px"></span></span>V<svg width="10.16" height="10.40" viewBox="0 0 10 10" style="vertical-align:top;position:relative;top:-1.00px;overflow:visible" fill="none" stroke="#d0d0d0" stroke-width="0.70"><use href="#G16"/></svg><svg width="10.16" height="10.40" viewBox="0 0 10 10" style="vertical-align:top;position:relative;top:-1.00px;overflow:visible" fill="none" stroke="#d0d0d0" stroke-width="0.70"><use href="#G13"/></svg><svg width="10.16" height="10.40" viewBox="0 0 10 10" style="vertical-align:top;position:relative;top:-1.00px;overflow:visible" fill="none" stroke="#d0d0d0" stroke-width="0.70"><use href="#G16"/></svg></div>
<div class="a m" style="left:2.2px;top:82.40px">0047F080</div>
<div class="a m" style="left:48.10px;top:82.40px">E0 B5 CB 76</div>
<div class="a m" style="left:109.10px;top:82.40px">A0 87 CB 76</div>
<div class="a m" style="left:170.10px;top:82.40px">60 87 CB 76</div>
<div class="a m" style="left:231.10px;top:82.40px">C0 4A CB 76</div>
<div class="a m" style="left:292px;top:82.40px;width:83px;overflow:hidden;color:#d8d8d8"><svg width="10.16" height="10.40" viewBox="0 0 10 10" style="vertical-align:top;position:relative;top:-1.00px;overflow:visible" fill="none" stroke="#d0d0d0" stroke-width="0.70"><use href="#G17"/></svg><svg width="10.16" height="10.40" viewBox="0 0 10 10" style="vertical-align:top;position:relative;top:-1.00px;overflow:visible" fill="none" stroke="#d0d0d0" stroke-width="0.70"><use href="#G16"/></svg><svg width="10.16" height="10.40" viewBox="0 0 10 10" style="vertical-align:top;position:relative;top:-1.00px;overflow:visible" fill="none" stroke="#d0d0d0" stroke-width="0.70"><use href="#G14"/></svg><svg width="10.16" height="10.40" viewBox="0 0 10 10" style="vertical-align:top;position:relative;top:-1.00px;overflow:visible" fill="none" stroke="#d0d0d0" stroke-width="0.70"><use href="#G16"/></svg>`<svg width="10.16" height="10.40" viewBox="0 0 10 10" style="vertical-align:top;position:relative;top:-1.00px;overflow:visible" fill="none" stroke="#d0d0d0" stroke-width="0.70"><use href="#G14"/></svg>v<svg width="10.16" height="10.40" viewBox="0 0 10 10" style="vertical-align:top;position:relative;top:-1.00px;overflow:visible" fill="none" stroke="#d0d0d0" stroke-width="0.70"><use href="#G15"/></svg><svg width="10.16" height="10.40" viewBox="0 0 10 10" style="vertical-align:top;position:relative;top:-1.00px;overflow:visible" fill="none" stroke="#d0d0d0" stroke-width="0.70"><use href="#G16"/></svg></div>
<div class="a m" style="left:2.2px;top:92.50px">0047F090</div>
<div class="a m" style="left:48.10px;top:92.50px">10 A8 CB 76</div>
<div class="a m" style="left:109.10px;top:92.50px">70 48 CB 76</div>
<div class="a m" style="left:170.10px;top:92.50px">30 45 CB 76</div>
<div class="a m" style="left:231.10px;top:92.50px">80 B4 CB 76</div>
<div class="a m" style="left:292px;top:92.50px;width:83px;overflow:hidden;color:#d8d8d8"><span style="display:inline-block;width:5.08px;height:6px;vertical-align:-0.5px"><span style="display:inline-block;width:5px;height:6px;background:#d0d0d0;margin-left:0.5px"></span></span><svg width="10.16" height="10.40" viewBox="0 0 10 10" style="vertical-align:top;position:relative;top:-1.00px;overflow:visible" fill="none" stroke="#d0d0d0" stroke-width="0.70"><use href="#G17"/></svg>vpH<svg width="10.16" height="10.40" viewBox="0 0 10 10" style="vertical-align:top;position:relative;top:-1.00px;overflow:visible" fill="none" stroke="#d0d0d0" stroke-width="0.70"><use href="#G16"/></svg>0E<svg width="10.16" height="10.40" viewBox="0 0 10 10" style="vertical-align:top;position:relative;top:-1.00px;overflow:visible" fill="none" stroke="#d0d0d0" stroke-width="0.70"><use href="#G16"/></svg><span style="display:inline-block;width:5.08px;height:6px;vertical-align:-0.5px"><span style="display:inline-block;width:5px;height:6px;background:#d0d0d0;margin-left:0.5px"></span></span><svg width="10.16" height="10.40" viewBox="0 0 10 10" style="vertical-align:top;position:relative;top:-1.00px;overflow:visible" fill="none" stroke="#d0d0d0" stroke-width="0.70"><use href="#G12"/></svg>v</div>
<div class="a m" style="left:2.2px;top:102.60px">0047F0A0</div>
<div class="a m" style="left:48.10px;top:102.60px">90 AA CB 76</div>
<div class="a m" style="left:109.10px;top:102.60px">70 BB CB 76</div>
<div class="a m" style="left:170.10px;top:102.60px">10 33 CB 76</div>
<div class="a m" style="left:231.10px;top:102.60px">F0 AF CB 76</div>
<div class="a m" style="left:292px;top:102.60px;width:83px;overflow:hidden;color:#d8d8d8"><svg width="10.16" height="10.40" viewBox="0 0 10 10" style="vertical-align:top;position:relative;top:-1.00px;overflow:visible" fill="none" stroke="#d0d0d0" stroke-width="0.70"><use href="#G15"/></svg><svg width="10.16" height="10.40" viewBox="0 0 10 10" style="vertical-align:top;position:relative;top:-1.00px;overflow:visible" fill="none" stroke="#d0d0d0" stroke-width="0.70"><use href="#G16"/></svg>p<svg width="10.16" height="10.40" viewBox="0 0 10 10" style="vertical-align:top;position:relative;top:-1.00px;overflow:visible" fill="none" stroke="#d0d0d0" stroke-width="0.70"><use href="#G12"/></svg>v<span style="display:inline-block;width:5.08px;height:6px;vertical-align:-0.5px"><span style="display:inline-block;width:5px;height:6px;background:#d0d0d0;margin-left:0.5px"></span></span>3<svg width="10.16" height="10.40" viewBox="0 0 10 10" style="vertical-align:top;position:relative;top:-1.00px;overflow:visible" fill="none" stroke="#d0d0d0" stroke-width="0.70"><use href="#G16"/></svg><svg width="10.16" height="10.40" viewBox="0 0 10 10" style="vertical-align:top;position:relative;top:-1.00px;overflow:visible" fill="none" stroke="#d0d0d0" stroke-width="0.70"><use href="#G16"/></svg><svg width="10.16" height="10.40" viewBox="0 0 10 10" style="vertical-align:top;position:relative;top:-1.00px;overflow:visible" fill="none" stroke="#d0d0d0" stroke-width="0.70"><use href="#G16"/></svg></div>
<div class="a m" style="left:2.2px;top:112.70px">0047F0B0</div>
<div class="a m" style="left:48.10px;top:112.70px">40 4B CB 76</div>
<div class="a m" style="left:109.10px;top:112.70px">90 44 CB 76</div>
<div class="a m" style="left:170.10px;top:112.70px">A0 A9 CB 76</div>
<div class="a m" style="left:231.10px;top:112.70px">D0 AC CB 76</div>
<div class="a m" style="left:292px;top:112.70px;width:83px;overflow:hidden;color:#d8d8d8">@K<svg width="10.16" height="10.40" viewBox="0 0 10 10" style="vertical-align:top;position:relative;top:-1.00px;overflow:visible" fill="none" stroke="#d0d0d0" stroke-width="0.70"><use href="#G16"/></svg><svg width="10.16" height="10.40" viewBox="0 0 10 10" style="vertical-align:top;position:relative;top:-1.00px;overflow:visible" fill="none" stroke="#d0d0d0" stroke-width="0.70"><use href="#G13"/></svg><svg width="10.16" height="10.40" viewBox="0 0 10 10" style="vertical-align:top;position:relative;top:-1.00px;overflow:visible" fill="none" stroke="#d0d0d0" stroke-width="0.70"><use href="#G16"/></svg><svg width="10.16" height="10.40" viewBox="0 0 10 10" style="vertical-align:top;position:relative;top:-1.00px;overflow:visible" fill="none" stroke="#d0d0d0" stroke-width="0.70"><use href="#G12"/></svg><svg width="10.16" height="10.40" viewBox="0 0 10 10" style="vertical-align:top;position:relative;top:-1.00px;overflow:visible" fill="none" stroke="#d0d0d0" stroke-width="0.70"><use href="#G16"/></svg><svg width="10.16" height="10.40" viewBox="0 0 10 10" style="vertical-align:top;position:relative;top:-1.00px;overflow:visible" fill="none" stroke="#d0d0d0" stroke-width="0.70"><use href="#G17"/></svg><svg width="10.16" height="10.40" viewBox="0 0 10 10" style="vertical-align:top;position:relative;top:-1.00px;overflow:visible" fill="none" stroke="#d0d0d0" stroke-width="0.70"><use href="#G16"/></svg></div>
<div class="a m" style="left:2.2px;top:122.80px">0047F0C0</div>
<div class="a m" style="left:48.10px;top:122.80px">A0 AC CB 76</div>
<div class="a m" style="left:109.10px;top:122.80px">D0 45 CB 76</div>
<div class="a m" style="left:170.10px;top:122.80px">60 C5 CB 76</div>
<div class="a m" style="left:231.10px;top:122.80px">E0 C5 CB 76</div>
<div class="a m" style="left:292px;top:122.80px;width:83px;overflow:hidden;color:#d8d8d8"><svg width="10.16" height="10.40" viewBox="0 0 10 10" style="vertical-align:top;position:relative;top:-1.00px;overflow:visible" fill="none" stroke="#d0d0d0" stroke-width="0.70"><use href="#G16"/></svg><svg width="10.16" height="10.40" viewBox="0 0 10 10" style="vertical-align:top;position:relative;top:-1.00px;overflow:visible" fill="none" stroke="#d0d0d0" stroke-width="0.70"><use href="#G16"/></svg><svg width="10.16" height="10.40" viewBox="0 0 10 10" style="vertical-align:top;position:relative;top:-1.00px;overflow:visible" fill="none" stroke="#d0d0d0" stroke-width="0.70"><use href="#G15"/></svg><svg width="10.16" height="10.40" viewBox="0 0 10 10" style="vertical-align:top;position:relative;top:-1.00px;overflow:visible" fill="none" stroke="#d0d0d0" stroke-width="0.70"><use href="#G16"/></svg>`<svg width="10.16" height="10.40" viewBox="0 0 10 10" style="vertical-align:top;position:relative;top:-1.00px;overflow:visible" fill="none" stroke="#d0d0d0" stroke-width="0.70"><use href="#G16"/></svg>v<svg width="10.16" height="10.40" viewBox="0 0 10 10" style="vertical-align:top;position:relative;top:-1.00px;overflow:visible" fill="none" stroke="#d0d0d0" stroke-width="0.70"><use href="#G15"/></svg><svg width="10.16" height="10.40" viewBox="0 0 10 10" style="vertical-align:top;position:relative;top:-1.00px;overflow:visible" fill="none" stroke="#d0d0d0" stroke-width="0.70"><use href="#G16"/></svg></div>
<div class="a m" style="left:2.2px;top:132.90px">0047F0D0</div>
<div class="a m" style="left:48.10px;top:132.90px">60 49 CB 76</div>
<div class="a m" style="left:109.10px;top:132.90px">50 47 CB 76</div>
<div class="a m" style="left:170.10px;top:132.90px">60 AC CB 76</div>
<div class="a m" style="left:231.10px;top:132.90px">B0 BE CB 76</div>
<div class="a m" style="left:292px;top:132.90px;width:83px;overflow:hidden;color:#d8d8d8">`I<svg width="10.16" height="10.40" viewBox="0 0 10 10" style="vertical-align:top;position:relative;top:-1.00px;overflow:visible" fill="none" stroke="#d0d0d0" stroke-width="0.70"><use href="#G16"/></svg>PG<svg width="10.16" height="10.40" viewBox="0 0 10 10" style="vertical-align:top;position:relative;top:-1.00px;overflow:visible" fill="none" stroke="#d0d0d0" stroke-width="0.70"><use href="#G16"/></svg>`   v<svg width="10.16" height="10.40" viewBox="0 0 10 10" style="vertical-align:top;position:relative;top:-1.00px;overflow:visible" fill="none" stroke="#d0d0d0" stroke-width="0.70"><use href="#G12"/></svg><svg width="10.16" height="10.40" viewBox="0 0 10 10" style="vertical-align:top;position:relative;top:-1.00px;overflow:visible" fill="none" stroke="#d0d0d0" stroke-width="0.70"><use href="#G16"/></svg></div>
<div class="a m" style="left:2.2px;top:143.00px">0047F0E0</div>
<div class="a m" style="left:48.10px;top:143.00px">B0 BA CB 76</div>
<div class="a m" style="left:109.10px;top:143.00px">90 AB CB 76</div>
<div class="a m" style="left:170.10px;top:143.00px">D0 B1 CB 76</div>
<div class="a m" style="left:231.10px;top:143.00px">10 C0 CB 76</div>
<div class="a m" style="left:292px;top:143.00px;width:83px;overflow:hidden;color:#d8d8d8"><svg width="10.16" height="10.40" viewBox="0 0 10 10" style="vertical-align:top;position:relative;top:-1.00px;overflow:visible" fill="none" stroke="#d0d0d0" stroke-width="0.70"><use href="#G14"/></svg><svg width="10.16" height="10.40" viewBox="0 0 10 10" style="vertical-align:top;position:relative;top:-1.00px;overflow:visible" fill="none" stroke="#d0d0d0" stroke-width="0.70"><use href="#G16"/></svg><svg width="10.16" height="10.40" viewBox="0 0 10 10" style="vertical-align:top;position:relative;top:-1.00px;overflow:visible" fill="none" stroke="#d0d0d0" stroke-width="0.70"><use href="#G14"/></svg><svg width="10.16" height="10.40" viewBox="0 0 10 10" style="vertical-align:top;position:relative;top:-1.00px;overflow:visible" fill="none" stroke="#d0d0d0" stroke-width="0.70"><use href="#G16"/></svg><svg width="10.16" height="10.40" viewBox="0 0 10 10" style="vertical-align:top;position:relative;top:-1.00px;overflow:visible" fill="none" stroke="#d0d0d0" stroke-width="0.70"><use href="#G14"/></svg><svg width="10.16" height="10.40" viewBox="0 0 10 10" style="vertical-align:top;position:relative;top:-1.00px;overflow:visible" fill="none" stroke="#d0d0d0" stroke-width="0.70"><use href="#G16"/></svg><span style="display:inline-block;width:5.08px;height:6px;vertical-align:-0.5px"><span style="display:inline-block;width:5px;height:6px;background:#d0d0d0;margin-left:0.5px"></span></span><svg width="10.16" height="10.40" viewBox="0 0 10 10" style="vertical-align:top;position:relative;top:-1.00px;overflow:visible" fill="none" stroke="#d0d0d0" stroke-width="0.70"><use href="#G15"/></svg>v</div>
<div class="a m" style="left:2.2px;top:153.10px">0047F0F0</div>
<div class="a m" style="left:48.10px;top:153.10px">10 B8 CB 76</div>
<div class="a m" style="left:109.10px;top:153.10px">D0 3C CB 76</div>
<div class="a m" style="left:170.10px;top:153.10px">60 C0 CB 76</div>
<div class="a m" style="left:231.10px;top:153.10px">D0 BE CB 76</div>
<div class="a m" style="left:292px;top:153.10px;width:83px;overflow:hidden;color:#d8d8d8"><span style="display:inline-block;width:5.08px;height:6px;vertical-align:-0.5px"><span style="display:inline-block;width:5px;height:6px;background:#d0d0d0;margin-left:0.5px"></span></span><svg width="10.16" height="10.40" viewBox="0 0 10 10" style="vertical-align:top;position:relative;top:-1.00px;overflow:visible" fill="none" stroke="#d0d0d0" stroke-width="0.70"><use href="#G12"/></svg>v?<svg width="10.16" height="10.40" viewBox="0 0 10 10" style="vertical-align:top;position:relative;top:-1.00px;overflow:visible" fill="none" stroke="#d0d0d0" stroke-width="0.70"><use href="#G16"/></svg>`<svg width="10.16" height="10.40" viewBox="0 0 10 10" style="vertical-align:top;position:relative;top:-1.00px;overflow:visible" fill="none" stroke="#d0d0d0" stroke-width="0.70"><use href="#G15"/></svg>v<svg width="10.16" height="10.40" viewBox="0 0 10 10" style="vertical-align:top;position:relative;top:-1.00px;overflow:visible" fill="none" stroke="#d0d0d0" stroke-width="0.70"><use href="#G13"/></svg><svg width="10.16" height="10.40" viewBox="0 0 10 10" style="vertical-align:top;position:relative;top:-1.00px;overflow:visible" fill="none" stroke="#d0d0d0" stroke-width="0.70"><use href="#G16"/></svg></div>
</div>
<div class="a" style="left:45.90px;top:458.00px;width:1.10px;height:160.30px;background:#b0b0b0"></div>
<div class="a" style="left:107.50px;top:458.00px;width:1.10px;height:160.30px;background:#b0b0b0"></div>
<div class="a" style="left:168.10px;top:458.00px;width:1.10px;height:160.30px;background:#b0b0b0"></div>
<div class="a" style="left:228.80px;top:458.00px;width:1.10px;height:160.30px;background:#b0b0b0"></div>
<div class="a" style="left:289.20px;top:458.00px;width:1.10px;height:160.30px;background:#b0b0b0"></div>
<div class="a" style="left:374.80px;top:458.00px;width:1.10px;height:160.30px;background:#b0b0b0"></div>
<div class="a" style="left:589.00px;top:446.00px;width:479.60px;height:10.50px;background:#800080"></div>
<div class="a m" style="left:591.20px;top:446.70px;">001AFEF0</div>
<div class="a m" style="left:641.50px;top:446.70px;">00400000</div>
<div class="a m" style="left:686.70px;top:446.70px;"><svg width="10.16" height="10.40" viewBox="0 0 10 10" style="vertical-align:top;position:relative;top:-1.00px;overflow:visible" fill="none" stroke="#d4d4d4" stroke-width="0.75"><use href="#G0"/></svg><svg width="10.16" height="10.40" viewBox="0 0 10 10" style="vertical-align:top;position:relative;top:-1.00px;overflow:visible" fill="none" stroke="#d4d4d4" stroke-width="0.75"><use href="#G1"/></svg><svg width="10.16" height="10.40" viewBox="0 0 10 10" style="vertical-align:top;position:relative;top:-1.00px;overflow:visible" fill="none" stroke="#d4d4d4" stroke-width="0.75"><use href="#G2"/></svg><svg width="10.16" height="10.40" viewBox="0 0 10 10" style="vertical-align:top;position:relative;top:-1.00px;overflow:visible" fill="none" stroke="#d4d4d4" stroke-width="0.75"><use href="#G3"/></svg>.00400000</div>
<div class="a m" style="left:591.20px;top:456.83px;">001AFEF4</div>
<div class="a m" style="left:641.50px;top:456.83px;">00000000</div>
<div class="a m" style="left:591.20px;top:466.96px;">001AFEF8</div>
<div class="a m" style="left:641.50px;top:466.96px;">005AB810</div>
<div class="a m" style="left:591.20px;top:477.09px;">001AFEFC</div>
<div class="a m" style="left:641.50px;top:477.09px;">0000000A</div>
<div class="a m" style="left:591.20px;top:487.22px;">001AFF00</div>
<div class="a m" style="left:641.50px;top:487.22px;">0045F133</div>
<div class="a m" style="left:686.70px;top:487.22px;"><svg width="10.16" height="10.40" viewBox="0 0 10 10" style="vertical-align:top;position:relative;top:-1.00px;overflow:visible" fill="none" stroke="#d4d4d4" stroke-width="0.75"><use href="#G0"/></svg><svg width="10.16" height="10.40" viewBox="0 0 10 10" style="vertical-align:top;position:relative;top:-1.00px;overflow:visible" fill="none" stroke="#d4d4d4" stroke-width="0.75"><use href="#G1"/></svg><svg width="10.16" height="10.40" viewBox="0 0 10 10" style="vertical-align:top;position:relative;top:-1.00px;overflow:visible" fill="none" stroke="#d4d4d4" stroke-width="0.75"><use href="#G2"/></svg><svg width="10.16" height="10.40" viewBox="0 0 10 10" style="vertical-align:top;position:relative;top:-1.00px;overflow:visible" fill="none" stroke="#d4d4d4" stroke-width="0.75"><use href="#G3"/></svg>.&lt;ModuleEntryPoint&gt;</div>
<div class="a m" style="left:591.20px;top:497.35px;">001AFF04</div>
<div class="a m" style="left:641.50px;top:497.35px;">0045F133</div>
<div class="a m" style="left:686.70px;top:497.35px;"><svg width="10.16" height="10.40" viewBox="0 0 10 10" style="vertical-align:top;position:relative;top:-1.00px;overflow:visible" fill="none" stroke="#d4d4d4" stroke-width="0.75"><use href="#G0"/></svg><svg width="10.16" height="10.40" viewBox="0 0 10 10" style="vertical-align:top;position:relative;top:-1.00px;overflow:visible" fill="none" stroke="#d4d4d4" stroke-width="0.75"><use href="#G1"/></svg><svg width="10.16" height="10.40" viewBox="0 0 10 10" style="vertical-align:top;position:relative;top:-1.00px;overflow:visible" fill="none" stroke="#d4d4d4" stroke-width="0.75"><use href="#G2"/></svg><svg width="10.16" height="10.40" viewBox="0 0 10 10" style="vertical-align:top;position:relative;top:-1.00px;overflow:visible" fill="none" stroke="#d4d4d4" stroke-width="0.75"><use href="#G3"/></svg>.&lt;ModuleEntryPoint&gt;</div>
<div class="a m" style="left:591.20px;top:507.48px;">001AFF08</div>
<div class="a m" style="left:641.50px;top:507.48px;">00297000</div>
<div class="a m" style="left:591.20px;top:517.61px;">001AFF0C</div>
<div class="a m" style="left:641.50px;top:517.61px;">00000000</div>
<div class="a m" style="left:591.20px;top:527.74px;">001AFF10</div>
<div class="a m" style="left:641.50px;top:527.74px;">005AB810</div>
<div class="a m" style="left:591.20px;top:537.87px;">001AFF14</div>
<div class="a m" style="left:641.50px;top:537.87px;">00000000</div>
<div class="a m" style="left:591.20px;top:548.00px;">001AFF18</div>
<div class="a m" style="left:641.50px;top:548.00px;">00000044</div>
<div class="a m" style="left:591.20px;top:558.13px;">001AFF1C</div>
<div class="a m" style="left:641.50px;top:558.13px;">005C02B0</div>
<div class="a m" style="left:591.20px;top:568.26px;">001AFF20</div>
<div class="a m" style="left:641.50px;top:568.26px;">005B8420</div>
<div class="a m" style="left:686.70px;top:568.26px;">ASCII &quot;WinSta0\Default&quot;</div>
<div class="a m" style="left:591.20px;top:578.39px;">001AFF24</div>
<div class="a m" style="left:641.50px;top:578.39px;">005B8710</div>
<div class="a m" style="left:686.70px;top:578.39px;">ASCII &quot;D:\<svg width="10.16" height="10.40" viewBox="0 0 10 10" style="vertical-align:top;position:relative;top:-1.00px;overflow:visible" fill="none" stroke="#d4d4d4" stroke-width="0.75"><use href="#G14"/></svg><svg width="10.16" height="10.40" viewBox="0 0 10 10" style="vertical-align:top;position:relative;top:-1.00px;overflow:visible" fill="none" stroke="#d4d4d4" stroke-width="0.75"><use href="#G13"/></svg><svg width="10.16" height="10.40" viewBox="0 0 10 10" style="vertical-align:top;position:relative;top:-1.00px;overflow:visible" fill="none" stroke="#d4d4d4" stroke-width="0.75"><use href="#G0"/></svg><svg width="10.16" height="10.40" viewBox="0 0 10 10" style="vertical-align:top;position:relative;top:-1.00px;overflow:visible" fill="none" stroke="#d4d4d4" stroke-width="0.75"><use href="#G1"/></svg>\<svg width="10.16" height="10.40" viewBox="0 0 10 10" style="vertical-align:top;position:relative;top:-1.00px;overflow:visible" fill="none" stroke="#d4d4d4" stroke-width="0.75"><use href="#G12"/></svg><svg width="10.16" height="10.40" viewBox="0 0 10 10" style="vertical-align:top;position:relative;top:-1.00px;overflow:visible" fill="none" stroke="#d4d4d4" stroke-width="0.75"><use href="#G17"/></svg>\<svg width="10.16" height="10.40" viewBox="0 0 10 10" style="vertical-align:top;position:relative;top:-1.00px;overflow:visible" fill="none" stroke="#d4d4d4" stroke-width="0.75"><use href="#G13"/></svg><svg width="10.16" height="10.40" viewBox="0 0 10 10" style="vertical-align:top;position:relative;top:-1.00px;overflow:visible" fill="none" stroke="#d4d4d4" stroke-width="0.75"><use href="#G13"/></svg><svg width="10.16" height="10.40" viewBox="0 0 10 10" style="vertical-align:top;position:relative;top:-1.00px;overflow:visible" fill="none" stroke="#d4d4d4" stroke-width="0.75"><use href="#G12"/></svg>\<svg width="10.16" height="10.40" viewBox="0 0 10 10" style="vertical-align:top;position:relative;top:-1.00px;overflow:visible" fill="none" stroke="#d4d4d4" stroke-width="0.75"><use href="#G0"/></svg><svg width="10.16" height="10.40" viewBox="0 0 10 10" style="vertical-align:top;position:relative;top:-1.00px;overflow:visible" fill="none" stroke="#d4d4d4" stroke-width="0.75"><use href="#G1"/></svg><svg width="10.16" height="10.40" viewBox="0 0 10 10" style="vertical-align:top;position:relative;top:-1.00px;overflow:visible" fill="none" stroke="#d4d4d4" stroke-width="0.75"><use href="#G2"/></svg><svg width="10.16" height="10.40" viewBox="0 0 10 10" style="vertical-align:top;position:relative;top:-1.00px;overflow:visible" fill="none" stroke="#d4d4d4" stroke-width="0.75"><use href="#G3"/></svg>_2.exe&quot;</div>
<div class="a m" style="left:591.20px;top:588.52px;">001AFF28</div>
<div class="a m" style="left:641.50px;top:588.52px;">00000000</div>
<div class="a m" style="left:591.20px;top:598.65px;">001AFF2C</div>
<div class="a m" style="left:641.50px;top:598.65px;">00000000</div>
<div class="a m" style="left:591.20px;top:608.78px;">001AFF30</div>
<div class="a m" style="left:641.50px;top:608.78px;">00000000</div>
<div class="a" style="left:633.80px;top:446.00px;width:2.20px;height:172.30px;background:#6a6a6a"></div>
<div class="a" style="left:636.60px;top:446.00px;width:1.00px;height:172.30px;background:#c8c8c8"></div>
<div class="a" style="left:684.40px;top:446.00px;width:1.00px;height:172.30px;background:#c8c8c8"></div>
<svg class="a" style="left:0;top:1px" width="12" height="12" viewBox="0 0 12 12"><g fill="#ee0000" stroke="#600" stroke-width="0.3"><circle cx="5.8" cy="6.4" r="2.4"/><path d="M5.5 4.5L6 1.2L7 4.6ZM7.2 5.2L10.5 3.8L8 6.8ZM7.6 7L10 10L6.4 8.4ZM4.6 8L3.2 11L4.2 7ZM3.8 6.6L0.8 7.6L3.8 5.4ZM4 4.6L1.8 2L5 4.4Z"/><circle cx="1.8" cy="2" r="0.9"/><circle cx="10" cy="10.2" r="0.8"/></g></svg>
<div class="a" style="left:15px;top:1.8px;font-size:7.7px;line-height:11px;color:#8a8a8a;white-space:pre">KernelMode -</div>
<div class="a" style="left:62px;top:1.8px;font-size:7.7px;line-height:11px;white-space:pre"><svg width="9.00" height="9.00" viewBox="0 0 10 10" style="vertical-align:top;position:relative;top:1.20px;overflow:visible" fill="none" stroke="#8a8a8a" stroke-width="0.70"><use href="#G0"/></svg><svg width="9.00" height="9.00" viewBox="0 0 10 10" style="vertical-align:top;position:relative;top:1.20px;overflow:visible" fill="none" stroke="#8a8a8a" stroke-width="0.70"><use href="#G1"/></svg><svg width="9.00" height="9.00" viewBox="0 0 10 10" style="vertical-align:top;position:relative;top:1.20px;overflow:visible" fill="none" stroke="#8a8a8a" stroke-width="0.70"><use href="#G2"/></svg><svg width="9.00" height="9.00" viewBox="0 0 10 10" style="vertical-align:top;position:relative;top:1.20px;overflow:visible" fill="none" stroke="#8a8a8a" stroke-width="0.70"><use href="#G3"/></svg></div>
<div class="a" style="left:98.3px;top:1.8px;font-size:7.7px;line-height:11px;color:#8a8a8a;white-space:pre;transform:scaleX(0.932);transform-origin:0 0">_2.exe - [*G.P.U* - main thread, module user32]</div>
<div class="a" style="left:1001.50px;top:7.00px;width:9.00px;height:1.00px;background:#c4c4c4"></div>
<svg class="a" style="left:1031px;top:3px" width="9" height="9"><path d="M1 3h5v5h-5z M3 3V1h5v5h-2" stroke="#9a9a9a" stroke-width="0.8" fill="none"/></svg>
<svg class="a" style="left:1061.5px;top:3.5px" width="9" height="8"><path d="M1 0.5L8 7.5M8 0.5L1 7.5" stroke="#9a9a9a" stroke-width="0.8" fill="none"/></svg>
<div class="a" style="left:4.20px;top:15.30px;width:10.00px;height:10.00px;background:#00f0f0;box-shadow:1px 1px 0 #505050"></div>
<div class="a" style="left:5.6px;top:15.2px;font-size:9px;line-height:10px;font-weight:bold;color:#000">C</div>
<div class="a" style="left:19.0px;top:16px;font-size:8.3px;line-height:10px;color:#6a6a6a;white-space:pre"><u style="text-underline-offset:1px">F</u>ile</div>
<div class="a" style="left:40.0px;top:16px;font-size:8.3px;line-height:10px;color:#6a6a6a;white-space:pre"><u style="text-underline-offset:1px">V</u>iew</div>
<div class="a" style="left:66.0px;top:16px;font-size:8.3px;line-height:10px;color:#6a6a6a;white-space:pre"><u style="text-underline-offset:1px">D</u>ebug</div>
<div class="a" style="left:99.7px;top:16px;font-size:8.3px;line-height:10px;color:#6a6a6a;white-space:pre"><u style="text-underline-offset:1px">P</u>lugins</div>
<div class="a" style="left:134.7px;top:16px;font-size:8.3px;line-height:10px;color:#6a6a6a;white-space:pre">Opt<u style="text-underline-offset:1px">i</u>ons</div>
<div class="a" style="left:172.0px;top:16px;font-size:8.3px;line-height:10px;color:#6a6a6a;white-space:pre"><u style="text-underline-offset:1px">W</u>indow</div>
<div class="a" style="left:211.0px;top:16px;font-size:8.3px;line-height:10px;color:#6a6a6a;white-space:pre"><u style="text-underline-offset:1px">H</u>elp</div>
<div class="a" style="left:237.0px;top:16px;font-size:8.3px;line-height:10px;color:#6a6a6a;white-space:pre">Tools</div>
<div class="a" style="left:266.0px;top:16px;font-size:8.3px;line-height:10px;color:#6a6a6a;white-space:pre">BreakPoint-&gt;</div>
<div class="a" style="left:395.00px;top:14.30px;width:220.00px;height:13.70px;background:#f0f0f0"></div>
<div class="a" style="left:398.5px;top:16px;width:19.5px;height:12.3px;background:#f0f0f0;border-right:1px solid #8c8c8c;border-bottom:1px solid #a8a8a8;border-left:1px solid #fff;font-size:8px;line-height:11.5px;text-align:center;color:#444">BP</div>
<div class="a" style="left:418.0px;top:16px;width:16.7px;height:12.3px;background:#f0f0f0;border-right:1px solid #8c8c8c;border-bottom:1px solid #a8a8a8;border-left:1px solid #fff;font-size:8px;line-height:11.5px;text-align:center;color:#444">P</div>
<div class="a" style="left:434.7px;top:16px;width:22.7px;height:12.3px;background:#f0f0f0;border-right:1px solid #8c8c8c;border-bottom:1px solid #a8a8a8;border-left:1px solid #fff;font-size:8px;line-height:11.5px;text-align:center;color:#444">VB</div>
<div class="a" style="left:457.4px;top:16px;width:43.4px;height:12.3px;background:#f0f0f0;border-right:1px solid #8c8c8c;border-bottom:1px solid #a8a8a8;border-left:1px solid #fff;font-size:8px;line-height:11.5px;text-align:center;color:#444">Notepad</div>
<div class="a" style="left:500.8px;top:16px;width:25.0px;height:12.3px;background:#f0f0f0;border-right:1px solid #8c8c8c;border-bottom:1px solid #a8a8a8;border-left:1px solid #fff;font-size:8px;line-height:11.5px;text-align:center;color:#444">Calc</div>
<div class="a" style="left:525.8px;top:16px;width:30.0px;height:12.3px;background:#f0f0f0;border-right:1px solid #8c8c8c;border-bottom:1px solid #a8a8a8;border-left:1px solid #fff;font-size:8px;line-height:11.5px;text-align:center;color:#444">Folder</div>
<div class="a" style="left:555.8px;top:16px;width:21.2px;height:12.3px;background:#f0f0f0;border-right:1px solid #8c8c8c;border-bottom:1px solid #a8a8a8;border-left:1px solid #fff;font-size:8px;line-height:11.5px;text-align:center;color:#444">CMD</div>
<div class="a" style="left:577.0px;top:16px;width:33.5px;height:12.3px;background:#f0f0f0;border-right:1px solid #8c8c8c;border-bottom:1px solid #a8a8a8;border-left:1px solid #fff;font-size:8px;line-height:11.5px;text-align:center;color:#444">Exit</div>
<div class="a" style="left:1044.80px;top:16.00px;width:10.50px;height:10.50px;background:#ececec"></div>
<div class="a" style="left:1057.00px;top:16.00px;width:10.50px;height:10.50px;background:#ececec"></div>
<div class="a" style="left:1069.00px;top:16.00px;width:10.50px;height:10.50px;background:#ececec"></div>
<div class="a" style="left:1047px;top:22px;width:5px;height:1.3px;background:#a0acc0"></div>
<svg class="a" style="left:1058px;top:17px" width="9" height="9"><path d="M1.5 4h4.5v3.5h-4.5zM3 4V2h4.5v3.5h-1.5M1.5 5H6M3 2.8h4.5" stroke="#a0acc0" stroke-width="0.9" fill="none"/></svg>
<svg class="a" style="left:1070.5px;top:17.5px" width="8" height="8"><path d="M1 1L7 7M7 1L1 7" stroke="#90a4c0" stroke-width="1.3" fill="none"/></svg>
<div class="a" style="left:1.5px;top:28.2px;width:41px;height:12px;background:#c4c4c4;border-top:1px solid #a0a0a0;border-left:1px solid #a0a0a0;border-bottom:1px solid #e8e8e8;border-right:1px solid #e8e8e8"></div>
<div class="a" style="left:4px;top:30px;font-size:8.2px;line-height:10px;color:#303030;transform:scaleX(0.83);transform-origin:0 0">Running</div>
<div class="a" style="left:47.00px;top:28.3px;width:11.00px;height:11.5px;background:#c8c8c8;border-top:1px solid #f4f4f4;border-left:1px solid #f4f4f4;border-right:1px solid #505050;border-bottom:1px solid #505050"></div>
<svg class="a" style="left:47.00px;top:28.3px;overflow:visible" width="11.00" height="11.2" viewBox="0 0 11 11" preserveAspectRatio="none"><path d="M1.5 3.5h3l1 1h4v5h-8z" fill="#c8c800" stroke="#404000" stroke-width="0.6"/><path d="M2.5 6h8l-1.5 3.5h-7.5z" fill="#e8e800" stroke="#404000" stroke-width="0.5"/></svg>
<div class="a" style="left:59.30px;top:28.3px;width:11.20px;height:11.5px;background:#c8c8c8;border-top:1px solid #f4f4f4;border-left:1px solid #f4f4f4;border-right:1px solid #505050;border-bottom:1px solid #505050"></div>
<svg class="a" style="left:59.30px;top:28.3px;overflow:visible" width="11.20" height="11.2" viewBox="0 0 11 11" preserveAspectRatio="none"><path d="M5.5 2.5L1.5 5.5L5.5 8.5zM9.5 2.5L5.5 5.5L9.5 8.5z" fill="#000"/></svg>
<div class="a" style="left:72.00px;top:28.3px;width:11.50px;height:11.5px;background:#c8c8c8;border-top:1px solid #f4f4f4;border-left:1px solid #f4f4f4;border-right:1px solid #505050;border-bottom:1px solid #505050"></div>
<svg class="a" style="left:72.00px;top:28.3px;overflow:visible" width="11.50" height="11.2" viewBox="0 0 11 11" preserveAspectRatio="none"><path d="M2.5 2.5L8.5 8.5M8.5 2.5L2.5 8.5" stroke="#000" stroke-width="1.6"/></svg>
<div class="a" style="left:92.00px;top:28.3px;width:11.50px;height:11.5px;background:#c8c8c8;border-top:1px solid #f4f4f4;border-left:1px solid #f4f4f4;border-right:1px solid #505050;border-bottom:1px solid #505050"></div>
<svg class="a" style="left:92.00px;top:28.3px;overflow:visible" width="11.50" height="11.2" viewBox="0 0 11 11" preserveAspectRatio="none"><path d="M3 2L8.5 5.5L3 9z" fill="#00f"/></svg>
<div class="a" style="left:105.00px;top:28.3px;width:11.50px;height:11.5px;background:#c8c8c8;border-top:1px solid #f4f4f4;border-left:1px solid #f4f4f4;border-right:1px solid #505050;border-bottom:1px solid #505050"></div>
<svg class="a" style="left:105.00px;top:28.3px;overflow:visible" width="11.50" height="11.2" viewBox="0 0 11 11" preserveAspectRatio="none"><rect x="2.5" y="2" width="2" height="7" fill="#00f"/><rect x="6.5" y="2" width="2" height="7" fill="#00f"/></svg>
<div class="a" style="left:125.00px;top:28.3px;width:11.70px;height:11.5px;background:#c8c8c8;border-top:1px solid #f4f4f4;border-left:1px solid #f4f4f4;border-right:1px solid #505050;border-bottom:1px solid #505050"></div>
<svg class="a" style="left:125.00px;top:28.3px;overflow:visible" width="11.70" height="11.2" viewBox="0 0 11 11" preserveAspectRatio="none"><path d="M2 2V6H5" stroke="#00f" stroke-width="1.6" fill="none"/><path d="M4.5 3.8L7 6L4.5 8.2z" fill="#00f"/><rect x="8" y="1.5" width="1.6" height="1.6" fill="#00f"/><rect x="8" y="4.7" width="1.6" height="1.6" fill="#00f"/><rect x="8" y="7.9" width="1.6" height="1.6" fill="#00f"/></svg>
<div class="a" style="left:137.80px;top:28.3px;width:11.60px;height:11.5px;background:#c8c8c8;border-top:1px solid #f4f4f4;border-left:1px solid #f4f4f4;border-right:1px solid #505050;border-bottom:1px solid #505050"></div>
<svg class="a" style="left:137.80px;top:28.3px;overflow:visible" width="11.60" height="11.2" viewBox="0 0 11 11" preserveAspectRatio="none"><path d="M2.5 4H5.5" stroke="#00f" stroke-width="1.6"/><path d="M1.8 4.5L4 7L6.2 4.5z" fill="#00f"/><rect x="8" y="1.5" width="1.6" height="1.6" fill="#00f"/><rect x="8" y="4.7" width="1.6" height="1.6" fill="#00f"/><rect x="8" y="7.9" width="1.6" height="1.6" fill="#00f"/></svg>
<div class="a" style="left:153.90px;top:28.3px;width:11.70px;height:11.5px;background:#c8c8c8;border-top:1px solid #f4f4f4;border-left:1px solid #f4f4f4;border-right:1px solid #505050;border-bottom:1px solid #505050"></div>
<svg class="a" style="left:153.90px;top:28.3px;overflow:visible" width="11.70" height="11.2" viewBox="0 0 11 11" preserveAspectRatio="none"><path d="M2 2C5 3 5 5 3 7" stroke="#00f" stroke-width="1.6" fill="none"/><path d="M1 6.5L3.5 9.5L5.5 6.5z" fill="#00f"/><rect x="8" y="1.5" width="1.6" height="1.6" fill="#00f"/><rect x="8" y="4.7" width="1.6" height="1.6" fill="#00f"/><rect x="8" y="7.9" width="1.6" height="1.6" fill="#00f"/></svg>
<div class="a" style="left:166.70px;top:28.3px;width:11.60px;height:11.5px;background:#c8c8c8;border-top:1px solid #f4f4f4;border-left:1px solid #f4f4f4;border-right:1px solid #505050;border-bottom:1px solid #505050"></div>
<svg class="a" style="left:166.70px;top:28.3px;overflow:visible" width="11.60" height="11.2" viewBox="0 0 11 11" preserveAspectRatio="none"><path d="M3.5 1.5V7" stroke="#00f" stroke-width="1.6"/><path d="M1.5 6.5L3.5 9.5L5.5 6.5z" fill="#00f"/><rect x="8" y="1.5" width="1.6" height="1.6" fill="#00f"/><rect x="8" y="4.7" width="1.6" height="1.6" fill="#00f"/><rect x="8" y="7.9" width="1.6" height="1.6" fill="#00f"/></svg>
<div class="a" style="left:183.30px;top:28.3px;width:11.10px;height:11.5px;background:#c8c8c8;border-top:1px solid #f4f4f4;border-left:1px solid #f4f4f4;border-right:1px solid #505050;border-bottom:1px solid #505050"></div>
<svg class="a" style="left:183.30px;top:28.3px;overflow:visible" width="11.10" height="11.2" viewBox="0 0 11 11" preserveAspectRatio="none"><path d="M1.5 5H5.5" stroke="#00f" stroke-width="1.6"/><path d="M5 3L7 5L5 7z" fill="#00f"/><path d="M8.8 1.5V8.5H5" stroke="#00f" stroke-width="1.3" fill="none"/></svg>
<div class="a" style="left:203.90px;top:28.3px;width:11.10px;height:11.5px;background:#c8c8c8;border-top:1px solid #f4f4f4;border-left:1px solid #f4f4f4;border-right:1px solid #505050;border-bottom:1px solid #505050"></div>
<svg class="a" style="left:203.90px;top:28.3px;overflow:visible" width="11.10" height="11.2" viewBox="0 0 11 11" preserveAspectRatio="none"><path d="M1.5 5.5H5" stroke="#000" stroke-width="1.6"/><path d="M4.5 3.2L7 5.5L4.5 7.8z" fill="#000"/><rect x="8" y="1.5" width="1.6" height="1.6" fill="#000"/><rect x="8" y="4.7" width="1.6" height="1.6" fill="#000"/><rect x="8" y="7.9" width="1.6" height="1.6" fill="#000"/></svg>
<div class="a" style="left:224.20px;top:28.3px;width:11.5px;height:11.7px;background:#00ffff;border-top:1px solid #b0ffff;border-left:1px solid #b0ffff;border-right:1px solid #404040;border-bottom:1px solid #404040;font-family:'Liberation Serif',serif;font-weight:bold;font-size:9px;line-height:10px;text-align:center;color:#000">L</div>
<div class="a" style="left:236.76px;top:28.3px;width:11.5px;height:11.7px;background:#00ffff;border-top:1px solid #b0ffff;border-left:1px solid #b0ffff;border-right:1px solid #404040;border-bottom:1px solid #404040;font-family:'Liberation Serif',serif;font-weight:bold;font-size:9px;line-height:10px;text-align:center;color:#000">E</div>
<div class="a" style="left:249.32px;top:28.3px;width:11.5px;height:11.7px;background:#00ffff;border-top:1px solid #b0ffff;border-left:1px solid #b0ffff;border-right:1px solid #404040;border-bottom:1px solid #404040;font-family:'Liberation Serif',serif;font-weight:bold;font-size:9px;line-height:10px;text-align:center;color:#000">M</div>
<div class="a" style="left:261.88px;top:28.3px;width:11.5px;height:11.7px;background:#00ffff;border-top:1px solid #b0ffff;border-left:1px solid #b0ffff;border-right:1px solid #404040;border-bottom:1px solid #404040;font-family:'Liberation Serif',serif;font-weight:bold;font-size:9px;line-height:10px;text-align:center;color:#000">T</div>
<div class="a" style="left:274.44px;top:28.3px;width:11.5px;height:11.7px;background:#00ffff;border-top:1px solid #b0ffff;border-left:1px solid #b0ffff;border-right:1px solid #404040;border-bottom:1px solid #404040;font-family:'Liberation Serif',serif;font-weight:bold;font-size:9px;line-height:10px;text-align:center;color:#000">W</div>
<div class="a" style="left:287.00px;top:28.3px;width:11.5px;height:11.7px;background:#00ffff;border-top:1px solid #b0ffff;border-left:1px solid #b0ffff;border-right:1px solid #404040;border-bottom:1px solid #404040;font-family:'Liberation Serif',serif;font-weight:bold;font-size:9px;line-height:10px;text-align:center;color:#000">H</div>
<div class="a" style="left:299.56px;top:28.3px;width:11.5px;height:11.7px;background:#00ffff;border-top:1px solid #b0ffff;border-left:1px solid #b0ffff;border-right:1px solid #404040;border-bottom:1px solid #404040;font-family:'Liberation Serif',serif;font-weight:bold;font-size:9px;line-height:10px;text-align:center;color:#000">C</div>
<div class="a" style="left:312.12px;top:28.3px;width:11.5px;height:11.7px;background:#00ffff;border-top:1px solid #b0ffff;border-left:1px solid #b0ffff;border-right:1px solid #404040;border-bottom:1px solid #404040;font-family:'Liberation Serif',serif;font-weight:bold;font-size:9px;line-height:10px;text-align:center;color:#000">/</div>
<div class="a" style="left:324.68px;top:28.3px;width:11.5px;height:11.7px;background:#00ffff;border-top:1px solid #b0ffff;border-left:1px solid #b0ffff;border-right:1px solid #404040;border-bottom:1px solid #404040;font-family:'Liberation Serif',serif;font-weight:bold;font-size:9px;line-height:10px;text-align:center;color:#000">K</div>
<div class="a" style="left:337.24px;top:28.3px;width:11.5px;height:11.7px;background:#00ffff;border-top:1px solid #b0ffff;border-left:1px solid #b0ffff;border-right:1px solid #404040;border-bottom:1px solid #404040;font-family:'Liberation Serif',serif;font-weight:bold;font-size:9px;line-height:10px;text-align:center;color:#000">B</div>
<div class="a" style="left:349.80px;top:28.3px;width:11.5px;height:11.7px;background:#00ffff;border-top:1px solid #b0ffff;border-left:1px solid #b0ffff;border-right:1px solid #404040;border-bottom:1px solid #404040;font-family:'Liberation Serif',serif;font-weight:bold;font-size:9px;line-height:10px;text-align:center;color:#000">R</div>
<div class="a" style="left:362.36px;top:28.3px;width:11.5px;height:11.7px;background:#00ffff;border-top:1px solid #b0ffff;border-left:1px solid #b0ffff;border-right:1px solid #404040;border-bottom:1px solid #404040;font-family:'Liberation Serif',serif;font-weight:bold;font-size:7px;line-height:10px;text-align:center;color:#000">&bull;&bull;&bull;</div>
<div class="a" style="left:374.92px;top:28.3px;width:11.5px;height:11.7px;background:#00ffff;border-top:1px solid #b0ffff;border-left:1px solid #b0ffff;border-right:1px solid #404040;border-bottom:1px solid #404040;font-family:'Liberation Serif',serif;font-weight:bold;font-size:9px;line-height:10px;text-align:center;color:#000">S</div>
<div class="a" style="left:396.00px;top:28.3px;width:11.50px;height:11.5px;background:#c8c8c8;border-top:1px solid #f4f4f4;border-left:1px solid #f4f4f4;border-right:1px solid #505050;border-bottom:1px solid #505050"></div>
<svg class="a" style="left:396.00px;top:28.3px;overflow:visible" width="11.50" height="11.2" viewBox="0 0 11 11" preserveAspectRatio="none"><rect x="1.5" y="1.8" width="1.6" height="1.6" fill="#000"/><rect x="1.5" y="4.7" width="1.6" height="1.6" fill="#000"/><rect x="1.5" y="7.6" width="1.6" height="1.6" fill="#000"/><path d="M4 2.6H9.5M4 5.5H9.5M4 8.4H9.5" stroke="#000" stroke-width="1.2"/></svg>
<div class="a" style="left:408.50px;top:28.3px;width:11.50px;height:11.5px;background:#c8c8c8;border-top:1px solid #f4f4f4;border-left:1px solid #f4f4f4;border-right:1px solid #505050;border-bottom:1px solid #505050"></div>
<svg class="a" style="left:408.50px;top:28.3px;overflow:visible" width="11.50" height="11.2" viewBox="0 0 11 11" preserveAspectRatio="none"><rect x="1" y="1" width="3" height="3" fill="#000"/><rect x="4" y="1" width="3" height="3" fill="#00a"/><rect x="7" y="1" width="3" height="3" fill="#080"/><rect x="1" y="4" width="3" height="3" fill="#888"/><rect x="4" y="4" width="3" height="3" fill="#00f"/><rect x="7" y="4" width="3" height="3" fill="#0ff"/><rect x="1" y="7" width="3" height="3" fill="#a00"/><rect x="4" y="7" width="3" height="3" fill="#f00"/><rect x="7" y="7" width="3" height="3" fill="#fff"/></svg>
<div class="a" style="left:421px;top:28.3px;width:11.5px;height:11.2px;background:#c8c8c8;border-top:1px solid #f4f4f4;border-left:1px solid #f4f4f4;border-right:1px solid #505050;border-bottom:1px solid #505050;font-weight:bold;font-size:9.5px;line-height:10px;text-align:center;color:#000">?</div>
<svg class="a" style="left:511.70px;top:28.8px" width="10.30" height="10.6" viewBox="0 0 11 11" preserveAspectRatio="none"><rect x="0" y="0" width="11" height="11" fill="#2a7ed0"/><rect x="0.3" y="0.3" width="10.4" height="10.4" fill="none" stroke="#ffffff" stroke-opacity="0.35" stroke-width="0.6"/><path d="M2.5 3.8H8M6.5 2.5L8.2 3.8L6.5 5M8.5 7.2H3M4.5 6L2.8 7.2L4.5 8.5" stroke="#fff" stroke-width="1.1" fill="none"/></svg>
<svg class="a" style="left:524.00px;top:28.8px" width="11.00" height="10.6" viewBox="0 0 11 11" preserveAspectRatio="none"><rect x="0" y="0" width="11" height="11" fill="#8cc43c"/><rect x="0.3" y="0.3" width="10.4" height="10.4" fill="none" stroke="#ffffff" stroke-opacity="0.35" stroke-width="0.6"/><path d="M3.8 2V9M2.5 3.5L3.8 2L5.1 3.5M7.2 9V2M5.9 7.5L7.2 9L8.5 7.5" stroke="#fff" stroke-width="1.1" fill="none"/></svg>
<svg class="a" style="left:536.70px;top:28.8px" width="10.30" height="10.6" viewBox="0 0 11 11" preserveAspectRatio="none"><rect x="0" y="0" width="11" height="11" fill="#ff3aa0"/><rect x="0.3" y="0.3" width="10.4" height="10.4" fill="none" stroke="#ffffff" stroke-opacity="0.35" stroke-width="0.6"/><text x="5.1" y="8.6" font-size="8" font-weight="bold" text-anchor="middle" fill="#fff" font-family="Liberation Sans">A</text></svg>
<svg class="a" style="left:549.00px;top:28.8px" width="10.70" height="10.6" viewBox="0 0 11 11" preserveAspectRatio="none"><rect x="0" y="0" width="11" height="11" fill="#f8b040"/><rect x="0.3" y="0.3" width="10.4" height="10.4" fill="none" stroke="#ffffff" stroke-opacity="0.35" stroke-width="0.6"/><circle cx="5.2" cy="5.4" r="2.8" fill="#e02020"/></svg>
<svg class="a" style="left:561.70px;top:28.8px" width="10.80" height="10.6" viewBox="0 0 11 11" preserveAspectRatio="none"><rect x="0" y="0" width="11" height="11" fill="#b03050"/><rect x="0.3" y="0.3" width="10.4" height="10.4" fill="none" stroke="#ffffff" stroke-opacity="0.35" stroke-width="0.6"/><circle cx="5.4" cy="5.4" r="3.6" fill="none" stroke="#f0c0d0" stroke-width="0.8"/><circle cx="5.4" cy="5.4" r="2" fill="none" stroke="#f0c0d0" stroke-width="0.8"/></svg>
<svg class="a" style="left:574.00px;top:28.8px" width="11.00" height="10.6" viewBox="0 0 11 11" preserveAspectRatio="none"><rect x="0" y="0" width="11" height="11" fill="#6a7a48"/><rect x="0.3" y="0.3" width="10.4" height="10.4" fill="none" stroke="#ffffff" stroke-opacity="0.35" stroke-width="0.6"/><rect x="2" y="2" width="7" height="7" fill="#98b070"/><path d="M2 5.5H9" stroke="#404828"/></svg>
<svg class="a" style="left:586.00px;top:28.8px" width="11.50" height="10.6" viewBox="0 0 11 11" preserveAspectRatio="none"><rect x="0" y="0" width="11" height="11" fill="#3cc03c"/><rect x="0.3" y="0.3" width="10.4" height="10.4" fill="none" stroke="#ffffff" stroke-opacity="0.35" stroke-width="0.6"/><rect x="2.5" y="2.5" width="6.5" height="5.5" fill="none" stroke="#0a6010" stroke-width="1"/></svg>
<div class="a" style="left:600.00px;top:28.8px;width:10.5px;height:10.6px;background:#8c1010;padding:1px 0 0 1px"><svg width="8.50" height="8.50" viewBox="0 0 10 10" style="vertical-align:top;position:relative;top:0.00px;overflow:visible" fill="none" stroke="#ffe8e8" stroke-width="1.00"><use href="#G14"/></svg></div>
<div class="a" style="left:612.50px;top:28.8px;width:10.5px;height:10.6px;background:#8c1010;padding:1px 0 0 1px"><svg width="8.50" height="8.50" viewBox="0 0 10 10" style="vertical-align:top;position:relative;top:0.00px;overflow:visible" fill="none" stroke="#ffe8e8" stroke-width="1.00"><use href="#G13"/></svg></div>
<div class="a" style="left:625.00px;top:28.8px;width:10.5px;height:10.6px;background:#8c1010;padding:1px 0 0 1px"><svg width="8.50" height="8.50" viewBox="0 0 10 10" style="vertical-align:top;position:relative;top:0.00px;overflow:visible" fill="none" stroke="#ffe8e8" stroke-width="1.00"><use href="#G0"/></svg></div>
<div class="a" style="left:637.50px;top:28.8px;width:10.5px;height:10.6px;background:#8c1010;padding:1px 0 0 1px"><svg width="8.50" height="8.50" viewBox="0 0 10 10" style="vertical-align:top;position:relative;top:0.00px;overflow:visible" fill="none" stroke="#ffe8e8" stroke-width="1.00"><use href="#G1"/></svg></div>
<div class="a" style="left:651.50px;top:28.80px;width:10.50px;height:10.60px;background:#000"></div>
<svg class="a" style="left:0;top:0" width="1080" height="645"><g fill="#f05454"><path d="M339.2 53.8L361.2 57.6L357.2 60.6L466.2 103.6L465.6 105.3L355.2 63.8L356.6 67Z"/></g></svg>
<div class="a" style="left:481.5px;top:92.5px;height:15px;line-height:15px;white-space:nowrap"><svg width="15.10" height="14.60" viewBox="0 0 10 10" style="vertical-align:top;position:relative;top:0.00px;overflow:visible" fill="none" stroke="#f05050" stroke-width="1.30"><use href="#G4"/></svg><svg width="15.10" height="14.60" viewBox="0 0 10 10" style="vertical-align:top;position:relative;top:0.00px;overflow:visible" fill="none" stroke="#f05050" stroke-width="1.30"><use href="#G5"/></svg><svg width="15.10" height="14.60" viewBox="0 0 10 10" style="vertical-align:top;position:relative;top:0.00px;overflow:visible" fill="none" stroke="#f05050" stroke-width="1.30"><use href="#G6"/></svg><svg width="15.10" height="14.60" viewBox="0 0 10 10" style="vertical-align:top;position:relative;top:0.00px;overflow:visible" fill="none" stroke="#f05050" stroke-width="1.30"><use href="#G7"/></svg><svg width="15.10" height="14.60" viewBox="0 0 10 10" style="vertical-align:top;position:relative;top:0.00px;overflow:visible" fill="none" stroke="#f05050" stroke-width="1.30"><use href="#G8"/></svg></div>
<div class="a" style="left:403.8px;top:121.0px;width:265.0px;height:128.8px;background:#f0f0f0;border-radius:4px;border:1px solid #c8c8c8"></div>
<div class="a" style="left:405.5px;top:123.5px;font-size:7.6px;line-height:11px;color:#303030;white-space:pre">Enter expression to follow</div>
<svg class="a" style="left:653px;top:124px" width="10" height="10"><path d="M1 1L9 9M9 1L1 9" stroke="#333" stroke-width="0.9"/></svg>
<div class="a" style="left:405.5px;top:138.3px;width:245.5px;height:11.5px;background:#fff;border-top:1px solid #8a8a8a;border-left:1px solid #8a8a8a;border-bottom:1px solid #e0e0e0"></div>
<div class="a" style="left:407px;top:140.2px;width:44.5px;height:8px;background:#0a64d8"></div>
<div class="a" style="left:407.2px;top:139.3px;font-size:7.6px;line-height:10px;color:#fff;white-space:pre;letter-spacing:-0.4px">MessageBoxA</div>
<div class="a" style="left:640px;top:139.5px;width:10px;height:9.5px;background:#f0f0f0;border-left:1px solid #e0e0e0"></div>
<svg class="a" style="left:642.5px;top:142.5px" width="6" height="4"><path d="M0.5 0.5H5.5L3 3.5Z" fill="#111"/></svg>
<div class="a" style="left:654.8px;top:140.5px;width:9px;height:9px;background:#f0f0f0;border:1px solid #333"></div>
<svg class="a" style="left:654.8px;top:140.5px" width="9" height="9"><path d="M2 4.5L3.8 6.5L7.2 2.3" stroke="#111" stroke-width="1.2" fill="none"/></svg>
<div class="a" style="left:405.5px;top:152px;width:224px;height:11.5px;background:#ececec;border-top:1px solid #d0d0d0;border-left:1px solid #d0d0d0;border-right:1px solid #fff;border-bottom:1px solid #fff"></div>
<div class="a" style="left:633.0px;top:153.8px;width:9px;height:9px;background:#f0f0f0;border:1px solid #333"></div>
<svg class="a" style="left:633.0px;top:153.8px" width="9" height="9"><path d="M2 4.5L3.8 6.5L7.2 2.3" stroke="#111" stroke-width="1.2" fill="none"/></svg>
<div class="a" style="left:644.3px;top:153.8px;width:9px;height:9px;background:#f0f0f0;border:1px solid #333"></div>
<svg class="a" style="left:644.3px;top:153.8px" width="9" height="9"><path d="M2 4.5L3.8 6.5L7.2 2.3" stroke="#111" stroke-width="1.2" fill="none"/></svg>
<div class="a" style="left:655.0px;top:153.8px;width:9px;height:9px;background:#f0f0f0;border:1px solid #333"></div>
<svg class="a" style="left:655.0px;top:153.8px" width="9" height="9"><path d="M2 4.5L3.8 6.5L7.2 2.3" stroke="#111" stroke-width="1.2" fill="none"/></svg>
<div class="a" style="left:405px;top:166px;width:52.5px;height:56px;background:#f0f0f0;border-top:1px solid #fff;border-left:1px solid #fff;border-right:1px solid #a0a0a0;border-bottom:1px solid #a0a0a0"></div>
<svg class="a" style="left:411.5px;top:171.6px" width="10" height="10"><circle cx="5" cy="5" r="3.9" fill="#fff" stroke="#333" stroke-width="0.9"/><circle cx="5" cy="5" r="1.8" fill="#111"/></svg>
<div class="a" style="left:423.5px;top:172.0px;font-size:8.2px;line-height:10px;color:#333;white-space:pre;transform:scaleX(0.83);transform-origin:0 0">VA</div>
<svg class="a" style="left:411.5px;top:188.8px" width="10" height="10"><circle cx="5" cy="5" r="3.9" fill="#fff" stroke="#333" stroke-width="0.9"/></svg>
<div class="a" style="left:423.5px;top:189.2px;font-size:8.2px;line-height:10px;color:#333;white-space:pre;transform:scaleX(0.83);transform-origin:0 0">RVA</div>
<svg class="a" style="left:411.5px;top:206.0px" width="10" height="10"><circle cx="5" cy="5" r="3.9" fill="#fff" stroke="#333" stroke-width="0.9"/></svg>
<div class="a" style="left:423.5px;top:206.4px;font-size:8.2px;line-height:10px;color:#333;white-space:pre;transform:scaleX(0.83);transform-origin:0 0">OFFSET</div>
<div class="a" style="left:405px;top:222.3px;width:52.5px;height:27.3px;background:#f0f0f0;border-top:1px solid #fff;border-left:1px solid #fff;border-right:1px solid #a0a0a0;border-bottom:1px solid #a0a0a0"></div>
<div class="a" style="left:405px;top:231px;width:52.5px;text-align:center;font-size:7.2px;line-height:10px;color:#333">Cancel</div>
<div class="a" style="left:458.2px;top:166px;width:45px;height:83.6px;background:#f0f0f0;border:1px solid #6a6a6a"></div>
<div class="a" style="left:458.2px;top:202px;width:45px;text-align:center;font-size:7.9px;line-height:10px;color:#333">OK</div>
<div class="a" style="left:504px;top:166px;width:152px;height:83px;background:#fff"></div>
<div class="a" style="left:656px;top:166px;width:12px;height:83px;background:#f0f0f0"></div>
<div class="a" style="left:659.60px;top:176.00px;width:1.30px;height:11.50px;background:#777"></div>
<div class="a" style="left:504px;top:166px;width:162px;height:83px;overflow:hidden">
<svg class="a" style="left:2px;top:0.7px" width="9" height="8" viewBox="0 0 9 8"><rect x="0" y="0.5" width="1.6" height="7" fill="#8b0000"/><rect x="1.6" y="0.5" width="1.6" height="7" fill="#0000a0"/><rect x="3.2" y="0.5" width="1.4" height="7" fill="#006000"/><path d="M4.2 0.5L6 0.5L8.8 7.5H7Z" fill="#6a6a00"/></svg>
<div class="a" style="left:12.8px;top:-0.7px;font-family:'Liberation Mono',monospace;font-size:7.35px;line-height:10px;color:#222;white-space:pre">ABI_Get_DpiMetricsArray</div>
<svg class="a" style="left:2px;top:10.8px" width="9" height="8" viewBox="0 0 9 8"><rect x="0" y="0.5" width="1.6" height="7" fill="#8b0000"/><rect x="1.6" y="0.5" width="1.6" height="7" fill="#0000a0"/><rect x="3.2" y="0.5" width="1.4" height="7" fill="#006000"/><path d="M4.2 0.5L6 0.5L8.8 7.5H7Z" fill="#6a6a00"/></svg>
<div class="a" style="left:12.8px;top:9.4px;font-family:'Liberation Mono',monospace;font-size:7.35px;line-height:10px;color:#222;white-space:pre">ABI_Get_ForegroundWindow</div>
<svg class="a" style="left:2px;top:20.9px" width="9" height="8" viewBox="0 0 9 8"><rect x="0" y="0.5" width="1.6" height="7" fill="#8b0000"/><rect x="1.6" y="0.5" width="1.6" height="7" fill="#0000a0"/><rect x="3.2" y="0.5" width="1.4" height="7" fill="#006000"/><path d="M4.2 0.5L6 0.5L8.8 7.5H7Z" fill="#6a6a00"/></svg>
<div class="a" style="left:12.8px;top:19.5px;font-family:'Liberation Mono',monospace;font-size:7.35px;line-height:10px;color:#222;white-space:pre">ABI_Get_apfnClientWorkerNtDll</div>
<svg class="a" style="left:2px;top:31.0px" width="9" height="8" viewBox="0 0 9 8"><rect x="0" y="0.5" width="1.6" height="7" fill="#8b0000"/><rect x="1.6" y="0.5" width="1.6" height="7" fill="#0000a0"/><rect x="3.2" y="0.5" width="1.4" height="7" fill="#006000"/><path d="M4.2 0.5L6 0.5L8.8 7.5H7Z" fill="#6a6a00"/></svg>
<div class="a" style="left:12.8px;top:29.6px;font-family:'Liberation Mono',monospace;font-size:7.35px;line-height:10px;color:#222;white-space:pre">ABI_Get_cbwndExtraInternal</div>
<svg class="a" style="left:2px;top:41.1px" width="9" height="8" viewBox="0 0 9 8"><rect x="0" y="0.5" width="1.6" height="7" fill="#8b0000"/><rect x="1.6" y="0.5" width="1.6" height="7" fill="#0000a0"/><rect x="3.2" y="0.5" width="1.4" height="7" fill="#006000"/><path d="M4.2 0.5L6 0.5L8.8 7.5H7Z" fill="#6a6a00"/></svg>
<div class="a" style="left:12.8px;top:39.7px;font-family:'Liberation Mono',monospace;font-size:7.35px;line-height:10px;color:#222;white-space:pre">ABI_Get_currentMonitorTopologyId</div>
<svg class="a" style="left:2px;top:51.2px" width="9" height="8" viewBox="0 0 9 8"><rect x="0" y="0.5" width="1.6" height="7" fill="#8b0000"/><rect x="1.6" y="0.5" width="1.6" height="7" fill="#0000a0"/><rect x="3.2" y="0.5" width="1.4" height="7" fill="#006000"/><path d="M4.2 0.5L6 0.5L8.8 7.5H7Z" fill="#6a6a00"/></svg>
<div class="a" style="left:12.8px;top:49.8px;font-family:'Liberation Mono',monospace;font-size:7.35px;line-height:10px;color:#222;white-space:pre">ABI_Get_tooltipStrings</div>
<svg class="a" style="left:2px;top:61.3px" width="9" height="8" viewBox="0 0 9 8"><rect x="0" y="0.5" width="1.6" height="7" fill="#8b0000"/><rect x="1.6" y="0.5" width="1.6" height="7" fill="#0000a0"/><rect x="3.2" y="0.5" width="1.4" height="7" fill="#006000"/><path d="M4.2 0.5L6 0.5L8.8 7.5H7Z" fill="#6a6a00"/></svg>
<div class="a" style="left:12.8px;top:59.9px;font-family:'Liberation Mono',monospace;font-size:7.35px;line-height:10px;color:#222;white-space:pre">A_SHAFinal</div>
<svg class="a" style="left:2px;top:71.4px" width="9" height="8" viewBox="0 0 9 8"><rect x="0" y="0.5" width="1.6" height="7" fill="#8b0000"/><rect x="1.6" y="0.5" width="1.6" height="7" fill="#0000a0"/><rect x="3.2" y="0.5" width="1.4" height="7" fill="#006000"/><path d="M4.2 0.5L6 0.5L8.8 7.5H7Z" fill="#6a6a00"/></svg>
<div class="a" style="left:12.8px;top:70.0px;font-family:'Liberation Mono',monospace;font-size:7.35px;line-height:10px;color:#222;white-space:pre">A_SHAInit</div>
<svg class="a" style="left:2px;top:81.5px" width="9" height="8" viewBox="0 0 9 8"><rect x="0" y="0.5" width="1.6" height="7" fill="#8b0000"/><rect x="1.6" y="0.5" width="1.6" height="7" fill="#0000a0"/><rect x="3.2" y="0.5" width="1.4" height="7" fill="#006000"/><path d="M4.2 0.5L6 0.5L8.8 7.5H7Z" fill="#6a6a00"/></svg>
<div class="a" style="left:12.8px;top:80.1px;font-family:'Liberation Mono',monospace;font-size:7.35px;line-height:10px;color:#222;white-space:pre">A_SHAUpdate</div>
</div>
<div class="a" style="left:4.0px;top:621.5px;font-family:'Liberation Serif',serif;font-size:7.5px;line-height:10px;color:#ff0000;letter-spacing:-0.6px">M1</div>
<div class="a" style="left:20.5px;top:621.5px;font-family:'Liberation Serif',serif;font-size:7.5px;line-height:10px;color:#111;letter-spacing:-0.6px">M2</div>
<div class="a" style="left:37.0px;top:621.5px;font-family:'Liberation Serif',serif;font-size:7.5px;line-height:10px;color:#111;letter-spacing:-0.6px">M3</div>
<div class="a" style="left:53.5px;top:621.5px;font-family:'Liberation Serif',serif;font-size:7.5px;line-height:10px;color:#111;letter-spacing:-0.6px">M4</div>
<div class="a" style="left:70.0px;top:621.5px;font-family:'Liberation Serif',serif;font-size:7.5px;line-height:10px;color:#111;letter-spacing:-0.6px">M5</div>
<div class="a" style="left:143px;top:622.3px;font-family:'Liberation Serif',serif;font-size:8px;line-height:10px;color:#111;transform:scaleX(0.815);transform-origin:0 0">Command:</div>
<div class="a" style="left:184px;top:621px;width:125px;height:11.3px;background:#fff;border:1px solid #b0b0b0"></div>
<div class="a" style="left:298px;top:622px;width:10px;height:9.3px;background:#f0f0f0;border:1px solid #909090"></div>
<svg class="a" style="left:300.5px;top:625px" width="6" height="4"><path d="M0.5 0.5H5.5L3 3.5Z" fill="#111"/></svg>
<div class="a" style="left:316.5px;top:621px;width:685.5px;height:11.3px;background:#f0f0f0;border-top:1px solid #c0c0c0;border-left:1px solid #c0c0c0;border-bottom:1px solid #fff;border-right:1px solid #fff"></div>
<div class="a" style="left:1018.0px;top:622px;font-family:'Liberation Serif',serif;font-size:7px;line-height:10px;color:#ff0000;letter-spacing:-0.3px;transform:scaleX(1);transform-origin:0 0">ESP</div>
<div class="a" style="left:1041.0px;top:622px;font-family:'Liberation Serif',serif;font-size:7px;line-height:10px;color:#111;letter-spacing:-0.3px;transform:scaleX(1);transform-origin:0 0">EBP</div>
<div class="a" style="left:1062.0px;top:622px;font-family:'Liberation Serif',serif;font-size:7px;line-height:10px;color:#111;letter-spacing:-0.3px;transform:scaleX(0.82);transform-origin:0 0">NONE</div>
<div class="a" style="left:3px;top:634.5px;font-size:7.7px;line-height:10px;color:#333;white-space:pre;letter-spacing:-0.2px;transform:scaleX(0.93);transform-origin:0 0">Memory Window 1  Start:  0x47F000  End:  0x47EFFF  Size:  0x0 Value:  0x74C92B20</div>
<div class="a" style="left:1060.30px;top:634.30px;width:1.00px;height:10.70px;background:#8a8a8a"></div>
<div class="a" style="left:1061.30px;top:634.30px;width:1.00px;height:10.70px;background:#e8e8e8"></div>
<svg class="a" style="left:694px;top:584px" width="44" height="34" viewBox="0 0 44 34"><ellipse cx="15.5" cy="12" rx="14.5" ry="10.3" fill="#8c8c8c"/><path d="M4.5 18L2.5 23.5L9.5 20.5Z" fill="#8c8c8c"/><circle cx="11.5" cy="8.5" r="2" fill="#1a1a1a"/><circle cx="21" cy="8.5" r="2" fill="#1a1a1a"/><ellipse cx="29.5" cy="21" rx="12.8" ry="10.4" fill="#8c8c8c" stroke="#141414" stroke-width="1.5"/><path d="M35 29.5L39.5 33L33 31Z" fill="#8c8c8c"/><circle cx="26" cy="18" r="1.9" fill="#1a1a1a"/><circle cx="34.5" cy="18" r="1.9" fill="#1a1a1a"/></svg>
<div class="a" style="left:745px;top:587.5px;height:28px;white-space:nowrap"><svg width="29.70" height="27.00" viewBox="0 0 10 10" style="vertical-align:top;position:relative;top:0.00px;overflow:visible" fill="none" stroke="#8c8c8c" stroke-width="0.95"><use href="#G9"/></svg><svg width="29.70" height="27.00" viewBox="0 0 10 10" style="vertical-align:top;position:relative;top:0.00px;overflow:visible" fill="none" stroke="#8c8c8c" stroke-width="0.95"><use href="#G10"/></svg><svg width="29.70" height="27.00" viewBox="0 0 10 10" style="vertical-align:top;position:relative;top:0.00px;overflow:visible" fill="none" stroke="#8c8c8c" stroke-width="0.95"><use href="#G11"/></svg></div>
<div class="a" style="left:849.00px;top:599.30px;width:3.60px;height:3.60px;background:#8c8c8c;border-radius:50%"></div>
<div class="a" style="left:868px;top:584.5px;font-size:27px;line-height:32px;color:#8c8c8c;white-space:pre;letter-spacing:0.62px">COOKIE CAN</div>
</body></html>
